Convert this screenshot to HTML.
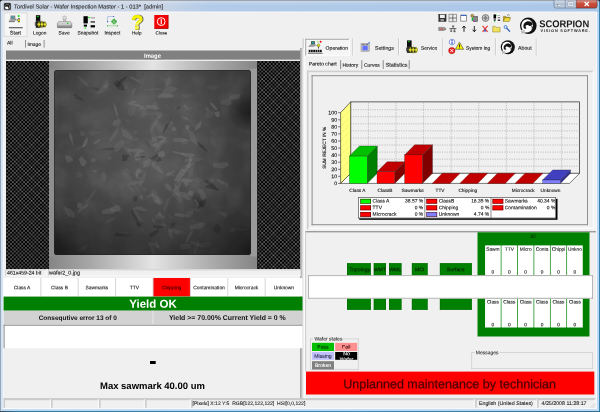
<!DOCTYPE html>
<html>
<head>
<meta charset="utf-8">
<style>
html,body{margin:0;padding:0;}
body{width:600px;height:412px;overflow:hidden;position:relative;background:#c3d4e8;font-family:"Liberation Sans",sans-serif;font-size:5.2px;color:#111;}
.a{position:absolute;box-sizing:border-box;}
.t{position:absolute;white-space:nowrap;line-height:1;}
.b{font-weight:bold;}
svg{position:absolute;overflow:visible;}
</style>
</head>
<body>
<svg style="left:0;top:0" width="600" height="412" viewBox="0 0 600 412">
<rect x="0.00" y="0.00" width="600.00" height="412.00" fill="#bdd8f4"/>
<linearGradient id="g0" x1="0" y1="0" x2="1" y2="0"><stop offset="0.0000" stop-color="#cdd7e5"/><stop offset="0.2700" stop-color="#c8d4e5"/><stop offset="0.3500" stop-color="#b3cbe8"/><stop offset="1.0000" stop-color="#aac7e8"/></linearGradient><rect x="0.00" y="0.00" width="600.00" height="12.00" fill="url(#g0)"/>
<linearGradient id="g1" x1="0" y1="0" x2="0" y2="1"><stop offset="0.0000" stop-color="rgb(255,255,255)" stop-opacity="0.28"/><stop offset="1.0000" stop-color="rgb(255,255,255)" stop-opacity="0"/></linearGradient><rect x="0.00" y="0.50" width="600.00" height="5.00" fill="url(#g1)"/>
<rect x="0.00" y="0.00" width="0.80" height="412.00" fill="#76828f"/>
<rect x="599.00" y="0.00" width="1.00" height="412.00" fill="#2f82aa"/>
<linearGradient id="g2" x1="0" y1="0" x2="1" y2="0"><stop offset="0.0000" stop-color="#3a4a58"/><stop offset="0.0300" stop-color="#2e7c9c"/><stop offset="0.6000" stop-color="#3d8cae"/><stop offset="1.0000" stop-color="#2e6f90"/></linearGradient><rect x="0.00" y="411.00" width="600.00" height="1.00" fill="url(#g2)"/>
<rect x="0.00" y="0.00" width="600.00" height="0.90" fill="#9a9ea4"/>
<polygon points="0,0 2.2,0 0,2.2" fill="#222"/><polygon points="600,0 597.8,0 600,2.2" fill="#334"/>
<rect x="0.80" y="1.00" width="0.70" height="410.00" fill="#e4edf7"/>
<rect x="2.60" y="11.50" width="594.30" height="397.60" fill="#fbfcfe"/>
<rect x="3.40" y="12.30" width="592.50" height="396.00" fill="#f0f0f0"/>
<rect x="3.50" y="12.40" width="24.00" height="24.40" fill="#f6f6f6"/><rect x="3.50" y="12.40" width="24.00" height="1.00" fill="#dadada"/><rect x="26.50" y="12.40" width="1.00" height="24.40" fill="#dadada"/><rect x="3.50" y="35.80" width="24.00" height="1.00" fill="#dadada"/><rect x="3.50" y="12.40" width="1.00" height="24.40" fill="#dadada"/>
<rect x="25.00" y="40.00" width="1.00" height="7.60" fill="#909090"/>
<rect x="43.60" y="40.00" width="1.00" height="7.60" fill="#909090"/>
<linearGradient id="g3" x1="0" y1="0" x2="1" y2="0"><stop offset="0.0000" stop-color="#9a9a9a"/><stop offset="0.2500" stop-color="#b0b0b0"/><stop offset="0.5000" stop-color="#cccccc"/><stop offset="0.7500" stop-color="#e8e8e8"/><stop offset="1.0000" stop-color="#f6f6f6"/></linearGradient><rect x="300.00" y="48.00" width="4.00" height="350.40" fill="url(#g3)"/>
<rect x="6.00" y="50.50" width="294.00" height="9.30" fill="#808080"/>
<rect x="6.00" y="59.80" width="294.00" height="1.20" fill="#ececec"/>
<g>
<defs>
<pattern id="hatchd" width="11" height="11" patternUnits="userSpaceOnUse" patternTransform="translate(9.4 68.4)">
<rect width="11" height="11" fill="#444"/><path d="M-1,-1 L12,12 M-1,12 L12,-1" stroke="#787878" stroke-width="0.8" fill="none"/>
</pattern>
<pattern id="hatch" width="3.75" height="3.75" patternUnits="userSpaceOnUse" patternTransform="translate(6.3 61.2)">
<rect x="0" y="0" width="1.875" height="1.875" fill="#000"/><rect x="1.875" y="1.875" width="1.875" height="1.875" fill="#000"/>
</pattern>
<linearGradient id="silver" x1="0" x2="1" y1="0" y2="0">
<stop offset="0" stop-color="#858585"/><stop offset="0.2" stop-color="#a8a8a8"/><stop offset="0.5" stop-color="#e4e4e4"/><stop offset="0.8" stop-color="#a8a8a8"/><stop offset="1" stop-color="#858585"/>
</linearGradient>
<linearGradient id="waf" x1="0" x2="1" y1="0" y2="0">
<stop offset="0" stop-color="#3f3f3f"/><stop offset="0.2" stop-color="#4a4a4a"/><stop offset="0.5" stop-color="#545454"/><stop offset="0.75" stop-color="#4a4a4a"/><stop offset="1" stop-color="#363636"/>
</linearGradient>
<linearGradient id="wafv" x1="0" x2="0" y1="0" y2="1">
<stop offset="0" stop-color="#000" stop-opacity="0.12"/><stop offset="0.15" stop-color="#000" stop-opacity="0"/><stop offset="0.6" stop-color="#000" stop-opacity="0"/><stop offset="1" stop-color="#000" stop-opacity="0.42"/>
</linearGradient>
<radialGradient id="blob1" cx="0.5" cy="0.5" r="0.5"><stop offset="0" stop-color="#000" stop-opacity="0.6"/><stop offset="1" stop-color="#000" stop-opacity="0"/></radialGradient>
<clipPath id="wclip"><rect x="54" y="70" width="197" height="185" rx="3"/></clipPath>
<filter id="bl" x="-5%" y="-5%" width="110%" height="110%"><feGaussianBlur stdDeviation="0.4"/></filter>
<filter id="noise" x="0" y="0" width="100%" height="100%"><feTurbulence type="fractalNoise" baseFrequency="0.045" numOctaves="3" seed="4" result="n"/><feColorMatrix type="matrix" values="0 0 0 0 1  0 0 0 0 1  0 0 0 0 1  1.6 0 0 0 -0.55"/></filter>
</defs>
<rect x="6" y="61" width="294" height="208" fill="url(#hatchd)"/><rect x="6" y="61" width="294" height="208" fill="url(#hatch)"/>
<rect x="49" y="61" width="208" height="208" fill="url(#silver)"/>
<rect x="49" y="68.5" width="5.5" height="188" fill="#8e8e8e"/>
<rect x="250.5" y="68.5" width="6.5" height="188" fill="#9a9a9a"/>
<rect x="54" y="70" width="197" height="185" rx="3" fill="url(#waf)"/>
<g clip-path="url(#wclip)">
<rect x="54" y="70" width="197" height="185" filter="url(#noise)" opacity="0.10"/>
<g filter="url(#bl)">
<polygon points="193.5,166.4 192.6,175.2 188.0,179.0 188.1,171.0" fill="#8e8e8e" opacity="0.14"/>
<polygon points="155.2,223.0 152.9,221.9 151.1,219.5 153.5,218.5 155.0,221.0" fill="#8e8e8e" opacity="0.26"/>
<polygon points="201.9,120.4 200.5,127.4 194.4,131.3 195.6,125.5" fill="#8e8e8e" opacity="0.28"/>
<polygon points="204.6,247.9 196.6,245.9 191.5,243.7 190.1,241.3 193.4,241.1 201.0,244.6" fill="#8e8e8e" opacity="0.20"/>
<polygon points="194.5,107.0 189.2,109.6 182.5,110.5 187.1,107.9" fill="#8e8e8e" opacity="0.14"/>
<polygon points="88.3,137.3 87.2,142.2 84.9,146.5 82.0,147.2 85.1,139.5" fill="#8e8e8e" opacity="0.29"/>
<polygon points="172.9,240.5 168.7,235.0 168.0,228.0 171.5,231.2" fill="#8e8e8e" opacity="0.27"/>
<polygon points="188.0,169.7 182.7,176.8 178.3,181.5 173.8,180.8 177.5,174.1 181.5,169.0" fill="#8e8e8e" opacity="0.28"/>
<polygon points="201.2,206.1 196.6,204.4 192.4,196.6 190.8,189.1 198.6,194.5 201.7,199.7" fill="#161616" opacity="0.13"/>
<polygon points="186.5,155.7 174.9,152.9 170.6,150.8 179.0,151.9" fill="#8e8e8e" opacity="0.29"/>
<polygon points="158.7,228.4 158.9,231.9 152.1,237.1 148.3,236.1 152.5,232.1" fill="#161616" opacity="0.19"/>
<polygon points="215.7,147.7 211.1,144.6 211.0,136.3 215.8,141.2" fill="#8e8e8e" opacity="0.08"/>
<polygon points="117.4,210.8 112.5,214.0 101.6,214.1 102.4,210.3 111.2,207.4" fill="#8e8e8e" opacity="0.29"/>
<polygon points="144.7,181.1 138.5,184.3 126.0,185.6 130.1,182.0 137.2,180.7" fill="#8e8e8e" opacity="0.17"/>
<polygon points="220.0,190.4 213.6,189.4 205.0,187.2 206.6,185.2 211.3,185.5" fill="#161616" opacity="0.29"/>
<polygon points="189.8,216.3 182.9,216.9 175.0,216.1 173.8,214.4 175.7,213.0 183.7,213.9" fill="#8e8e8e" opacity="0.29"/>
<polygon points="226.0,184.4 222.1,184.3 217.5,181.2 216.6,179.2 218.4,179.2 224.1,182.0" fill="#8e8e8e" opacity="0.19"/>
<polygon points="110.1,160.8 108.1,158.4 108.4,156.0 111.9,158.0" fill="#8e8e8e" opacity="0.17"/>
<polygon points="187.1,181.0 188.6,184.8 185.8,187.2 183.4,182.4" fill="#8e8e8e" opacity="0.27"/>
<polygon points="173.6,228.2 171.1,228.4 170.7,223.7 174.5,221.9 175.8,225.9" fill="#161616" opacity="0.16"/>
<polygon points="190.7,199.0 188.1,200.4 176.0,194.1 180.3,191.6 185.5,192.5" fill="#8e8e8e" opacity="0.23"/>
<polygon points="156.8,117.8 158.2,121.1 152.6,130.9 149.7,131.2 152.5,123.1" fill="#8e8e8e" opacity="0.18"/>
<polygon points="229.2,165.5 222.1,168.7 212.9,167.1 213.1,163.6 227.5,162.1" fill="#8e8e8e" opacity="0.20"/>
<polygon points="208.8,153.1 200.0,146.8 195.8,140.8 202.6,145.8" fill="#161616" opacity="0.28"/>
<polygon points="182.1,202.9 178.6,202.5 173.0,194.8 176.2,191.2 182.9,199.3" fill="#8e8e8e" opacity="0.19"/>
<polygon points="174.5,192.7 170.4,192.4 165.9,188.9 163.8,184.3 168.4,184.6 174.8,190.0" fill="#8e8e8e" opacity="0.11"/>
<polygon points="70.4,216.4 64.1,213.9 61.3,206.0 63.0,203.5 68.8,211.7" fill="#8e8e8e" opacity="0.08"/>
<polygon points="214.2,180.7 213.3,183.2 208.8,183.7 207.4,179.6 212.8,178.1" fill="#8e8e8e" opacity="0.15"/>
<polygon points="193.4,95.6 186.8,98.4 182.5,96.2 181.5,95.1 189.5,93.7" fill="#8e8e8e" opacity="0.13"/>
<polygon points="129.3,172.6 126.3,171.0 124.7,169.6 126.2,167.7 128.2,169.5" fill="#8e8e8e" opacity="0.15"/>
<polygon points="141.8,223.4 141.3,224.4 134.1,213.2 132.5,207.2 136.3,210.9 141.9,220.3" fill="#8e8e8e" opacity="0.20"/>
<polygon points="205.1,208.1 197.5,205.0 193.1,201.2 192.1,198.2 194.5,197.2 202.2,204.3" fill="#161616" opacity="0.18"/>
<polygon points="139.1,140.1 138.9,140.7 131.7,141.0 129.3,138.8 133.6,138.4 138.0,138.0" fill="#8e8e8e" opacity="0.11"/>
<polygon points="178.0,88.4 172.1,92.7 161.9,94.3 162.5,89.9 170.3,85.7" fill="#8e8e8e" opacity="0.17"/>
<polygon points="219.3,191.1 212.1,187.2 204.0,180.7 207.9,179.2 212.0,182.4" fill="#161616" opacity="0.24"/>
<polygon points="172.6,116.3 168.7,124.9 162.8,133.9 164.1,128.1" fill="#161616" opacity="0.26"/>
<polygon points="160.9,118.0 158.3,119.0 156.8,115.4 155.6,112.7 161.1,112.3 162.9,114.6" fill="#8e8e8e" opacity="0.18"/>
<polygon points="198.5,240.0 199.5,243.8 195.3,253.7 193.4,253.1 195.5,246.3" fill="#8e8e8e" opacity="0.21"/>
<polygon points="169.4,108.8 167.5,109.5 165.0,104.9 165.7,104.3 169.6,107.0" fill="#8e8e8e" opacity="0.09"/>
<polygon points="124.6,141.9 123.6,145.1 116.6,152.5 114.3,150.6 112.3,148.3 120.4,140.2" fill="#8e8e8e" opacity="0.16"/>
<polygon points="232.3,102.9 229.2,105.7 220.3,104.1 221.5,99.9 227.3,98.5" fill="#8e8e8e" opacity="0.13"/>
<polygon points="227.9,181.6 228.8,185.7 225.5,188.2 225.2,186.0" fill="#8e8e8e" opacity="0.11"/>
<polygon points="203.4,158.5 199.5,161.5 187.6,162.9 189.3,158.4 194.8,156.7" fill="#8e8e8e" opacity="0.13"/>
<polygon points="166.5,137.5 163.1,138.6 154.5,137.2 160.4,135.4" fill="#8e8e8e" opacity="0.29"/>
<polygon points="141.5,158.2 137.6,160.6 135.1,160.1 133.9,154.4 138.0,152.6" fill="#8e8e8e" opacity="0.28"/>
<polygon points="97.4,172.1 94.8,172.4 93.2,171.9 92.1,170.8 93.1,170.1 95.1,170.4" fill="#8e8e8e" opacity="0.24"/>
<polygon points="74.8,218.4 67.9,216.0 64.6,210.0 64.0,206.7 71.1,209.0 74.6,213.3" fill="#8e8e8e" opacity="0.21"/>
<polygon points="124.7,90.6 118.2,89.3 113.7,83.8 117.4,80.2 122.7,84.4" fill="#161616" opacity="0.28"/>
<polygon points="219.4,85.5 214.1,91.0 206.3,87.7 209.6,85.1" fill="#8e8e8e" opacity="0.10"/>
<polygon points="108.1,79.0 106.9,89.6 101.5,92.9 96.2,94.4 104.1,81.9" fill="#8e8e8e" opacity="0.17"/>
<polygon points="129.0,155.6 125.9,161.3 121.8,160.6 122.8,154.6" fill="#161616" opacity="0.30"/>
<polygon points="145.6,106.8 141.9,107.3 126.1,104.7 129.8,104.2 137.2,103.9" fill="#8e8e8e" opacity="0.25"/>
<polygon points="163.4,88.8 157.6,90.1 144.1,90.2 146.6,89.3 159.7,88.1" fill="#8e8e8e" opacity="0.14"/>
<polygon points="160.0,108.6 155.9,110.1 146.3,107.9 146.0,105.0 155.5,105.5" fill="#8e8e8e" opacity="0.26"/>
<polygon points="165.8,231.5 162.1,225.4 160.6,217.4 162.5,219.2 165.8,224.2" fill="#8e8e8e" opacity="0.11"/>
<polygon points="163.1,202.1 159.8,205.1 153.5,202.6 153.7,199.6 161.6,199.1" fill="#8e8e8e" opacity="0.22"/>
<polygon points="88.6,202.6 87.1,206.9 78.3,212.6 78.1,210.4 84.8,204.9" fill="#8e8e8e" opacity="0.27"/>
<polygon points="168.2,226.4 160.2,225.9 158.6,223.5 165.0,223.6" fill="#8e8e8e" opacity="0.11"/>
<polygon points="189.0,141.6 187.6,144.1 182.5,144.7 181.1,143.1 183.6,138.4 186.8,138.5" fill="#8e8e8e" opacity="0.14"/>
<polygon points="176.1,176.3 170.2,176.1 164.4,172.1 172.3,173.7" fill="#8e8e8e" opacity="0.13"/>
<polygon points="159.2,144.0 157.7,147.6 152.6,145.7 153.5,143.4 156.8,142.1" fill="#8e8e8e" opacity="0.19"/>
<polygon points="167.5,137.5 164.2,141.6 160.3,143.5 159.0,142.1 165.0,137.7" fill="#8e8e8e" opacity="0.29"/>
<polygon points="84.6,166.3 81.7,166.0 78.6,159.6 81.6,155.9 86.7,161.7" fill="#8e8e8e" opacity="0.25"/>
<polygon points="152.4,149.1 147.0,144.6 145.3,140.6 149.0,143.1" fill="#161616" opacity="0.13"/>
<polygon points="131.5,183.6 126.1,178.8 123.2,176.4 121.4,169.6 128.5,173.8 130.5,176.4" fill="#8e8e8e" opacity="0.09"/>
<polygon points="160.1,116.4 160.1,119.2 157.0,118.7 156.6,116.1 158.5,114.4" fill="#8e8e8e" opacity="0.09"/>
<polygon points="166.1,216.8 160.3,219.7 155.4,218.9 155.0,214.4 159.2,212.9" fill="#8e8e8e" opacity="0.19"/>
<polygon points="193.6,158.5 190.8,161.5 184.3,162.6 184.9,159.0 189.7,157.9" fill="#8e8e8e" opacity="0.23"/>
<polygon points="135.6,105.7 134.8,114.1 131.2,116.7 127.3,114.5 128.4,107.4" fill="#8e8e8e" opacity="0.13"/>
<polygon points="85.4,133.8 84.1,135.7 80.9,136.2 80.3,134.2 79.7,131.5 82.8,130.9" fill="#8e8e8e" opacity="0.16"/>
<polygon points="136.7,130.5 138.7,131.5 136.1,134.1 134.2,133.5 133.7,129.7" fill="#8e8e8e" opacity="0.12"/>
<polygon points="126.9,75.7 126.3,78.0 118.2,86.2 116.9,85.6 116.5,84.7 120.6,79.6" fill="#161616" opacity="0.28"/>
<polygon points="73.8,146.9 69.5,138.0 69.5,131.3 72.2,136.6" fill="#8e8e8e" opacity="0.26"/>
<polygon points="199.6,206.4 197.0,204.9 193.8,200.6 194.3,197.9 198.2,201.9" fill="#8e8e8e" opacity="0.28"/>
<polygon points="180.7,106.5 179.6,109.2 175.9,109.4 178.6,105.9" fill="#161616" opacity="0.18"/>
<polygon points="168.6,140.7 156.9,148.7 150.0,145.8 159.0,141.1" fill="#8e8e8e" opacity="0.16"/>
<polygon points="195.5,155.2 191.5,157.7 185.7,157.0 179.8,153.5 182.4,152.5 193.3,153.8" fill="#8e8e8e" opacity="0.28"/>
<polygon points="88.7,243.6 84.9,249.1 79.3,252.1 77.9,250.7 82.8,246.8" fill="#8e8e8e" opacity="0.19"/>
<polygon points="100.3,89.8 98.5,91.3 90.6,88.5 90.5,87.3 97.4,87.8" fill="#161616" opacity="0.13"/>
<polygon points="146.8,156.2 142.3,158.4 134.6,158.5 134.7,157.7 138.0,156.1 142.0,155.9" fill="#161616" opacity="0.22"/>
<polygon points="131.5,123.3 126.1,121.4 123.5,118.7 129.4,120.8" fill="#8e8e8e" opacity="0.12"/>
<polygon points="104.7,181.4 101.7,178.9 100.5,174.8 103.8,171.4 107.3,175.9" fill="#8e8e8e" opacity="0.18"/>
<polygon points="188.9,120.8 183.6,118.8 180.9,116.0 187.1,117.7" fill="#8e8e8e" opacity="0.27"/>
<polygon points="185.9,232.6 180.8,234.6 170.3,234.2 174.3,230.9 178.9,229.9" fill="#8e8e8e" opacity="0.08"/>
<polygon points="160.3,113.6 151.8,115.7 141.5,115.1 139.7,113.6 154.3,111.8" fill="#8e8e8e" opacity="0.07"/>
<polygon points="88.7,143.0 84.5,147.0 77.6,150.6 73.8,150.6 82.2,145.1" fill="#8e8e8e" opacity="0.09"/>
<polygon points="143.2,223.2 140.1,228.1 136.0,224.1 139.6,220.4" fill="#161616" opacity="0.19"/>
<polygon points="132.9,234.2 125.4,236.3 114.2,236.3 113.9,235.3 116.7,232.8 124.3,233.1" fill="#161616" opacity="0.18"/>
<polygon points="134.7,193.1 132.3,191.7 127.6,185.6 128.9,184.9 133.0,188.7" fill="#8e8e8e" opacity="0.16"/>
<polygon points="153.9,193.4 152.0,196.8 147.6,198.1 146.1,196.8 153.0,192.6" fill="#8e8e8e" opacity="0.21"/>
<polygon points="136.4,87.5 134.8,91.9 131.8,96.0 132.3,89.9" fill="#8e8e8e" opacity="0.22"/>
<polygon points="147.2,107.6 146.6,112.9 142.4,118.7 140.0,116.2 143.5,107.8" fill="#8e8e8e" opacity="0.09"/>
<polygon points="174.6,96.1 171.5,97.4 157.5,98.0 159.9,93.7 169.4,93.3" fill="#8e8e8e" opacity="0.29"/>
<polygon points="82.6,207.4 79.6,208.7 76.9,207.0 77.2,203.7 79.4,201.9 82.0,204.1" fill="#8e8e8e" opacity="0.25"/>
<polygon points="192.1,230.4 193.4,231.3 188.2,241.8 185.1,246.1 186.3,239.5 189.7,231.9" fill="#8e8e8e" opacity="0.29"/>
<polygon points="158.9,249.8 156.4,246.1 155.2,240.9 156.4,240.4 159.3,246.0" fill="#8e8e8e" opacity="0.25"/>
<polygon points="167.3,82.5 165.0,82.8 159.4,78.0 157.6,75.2 164.8,77.9" fill="#8e8e8e" opacity="0.08"/>
<polygon points="170.9,191.2 168.0,189.2 164.9,185.1 166.5,182.0 171.2,187.4" fill="#8e8e8e" opacity="0.16"/>
<polygon points="83.0,173.8 81.2,178.3 77.3,177.6 76.1,176.3 76.0,172.2 79.4,170.7" fill="#8e8e8e" opacity="0.10"/>
<polygon points="137.7,196.3 137.1,200.9 133.3,201.8 133.0,198.6 133.7,196.3" fill="#161616" opacity="0.17"/>
<polygon points="181.8,178.4 184.2,178.7 178.8,189.2 174.6,187.6 178.1,179.4" fill="#8e8e8e" opacity="0.14"/>
<polygon points="228.6,215.8 224.3,217.0 220.2,214.2 219.4,211.9 225.3,211.9" fill="#8e8e8e" opacity="0.16"/>
<polygon points="158.7,198.7 156.4,198.1 150.6,192.1 153.1,188.8 157.3,191.9" fill="#8e8e8e" opacity="0.14"/>
<polygon points="180.3,183.9 179.3,191.8 170.9,198.1 173.3,189.0" fill="#8e8e8e" opacity="0.14"/>
<polygon points="185.3,225.8 176.2,232.9 166.5,231.4 168.6,228.5 176.1,224.0" fill="#8e8e8e" opacity="0.08"/>
<polygon points="146.5,108.7 145.0,109.3 139.3,109.4 140.5,106.7 143.4,106.7" fill="#8e8e8e" opacity="0.25"/>
<polygon points="162.6,132.3 158.7,131.3 156.8,128.2 153.3,120.6 158.9,122.7 165.1,126.9" fill="#8e8e8e" opacity="0.10"/>
<polygon points="146.5,190.2 144.2,191.7 142.3,189.6 142.9,187.2 146.5,188.3" fill="#8e8e8e" opacity="0.13"/>
<polygon points="184.0,231.4 178.4,233.0 170.5,232.2 167.6,230.0 173.9,228.5 177.3,229.8" fill="#8e8e8e" opacity="0.20"/>
<polygon points="115.9,119.3 114.2,123.9 110.9,126.6 112.9,121.8" fill="#8e8e8e" opacity="0.17"/>
<polygon points="128.3,86.9 126.8,89.6 124.0,88.4 124.1,83.8 126.5,82.0" fill="#8e8e8e" opacity="0.12"/>
<polygon points="162.1,160.3 157.0,162.1 148.4,158.5 157.0,154.5" fill="#161616" opacity="0.29"/>
<polygon points="161.0,205.1 156.0,202.8 152.3,197.8 151.2,192.8 159.2,197.2" fill="#8e8e8e" opacity="0.27"/>
<polygon points="190.5,160.2 190.4,167.3 186.4,169.4 186.4,165.8" fill="#8e8e8e" opacity="0.28"/>
<polygon points="169.5,77.1 172.5,82.0 167.2,87.2 164.9,85.4 165.7,78.5" fill="#8e8e8e" opacity="0.16"/>
<polygon points="131.8,156.4 125.6,151.8 123.0,145.8 130.2,148.0" fill="#8e8e8e" opacity="0.17"/>
<polygon points="122.9,213.0 117.0,212.0 113.1,202.5 121.5,206.8" fill="#8e8e8e" opacity="0.13"/>
<polygon points="177.0,221.0 174.5,220.2 167.5,216.5 166.8,214.0 171.1,215.8 173.8,216.9" fill="#8e8e8e" opacity="0.09"/>
<polygon points="168.9,197.4 170.5,196.7 166.6,208.8 163.6,213.6 163.8,208.5 167.1,198.9" fill="#8e8e8e" opacity="0.17"/>
<polygon points="235.4,229.9 233.0,232.4 229.6,231.4 229.4,229.6 233.4,228.9" fill="#8e8e8e" opacity="0.12"/>
<polygon points="215.5,111.4 211.9,117.3 208.2,118.3 204.0,116.5 206.6,112.5 209.4,110.0" fill="#8e8e8e" opacity="0.12"/>
<polygon points="166.9,220.7 166.3,221.6 157.5,215.8 156.2,213.5 160.1,213.9 164.1,215.8" fill="#8e8e8e" opacity="0.14"/>
<polygon points="158.1,140.0 154.1,142.5 152.0,140.9 151.4,136.5 153.7,136.7" fill="#8e8e8e" opacity="0.22"/>
<polygon points="109.8,82.1 107.5,87.7 103.2,88.1 103.8,85.3" fill="#8e8e8e" opacity="0.23"/>
<polygon points="157.0,244.4 150.8,245.7 147.8,244.4 148.9,242.0 153.1,242.6" fill="#8e8e8e" opacity="0.18"/>
<polygon points="161.0,180.6 159.6,177.6 159.2,174.5 161.5,175.9" fill="#8e8e8e" opacity="0.09"/>
<polygon points="146.1,70.4 146.3,78.6 140.3,89.0 141.8,77.7" fill="#8e8e8e" opacity="0.10"/>
<polygon points="161.0,142.6 161.1,147.6 159.6,151.1 154.3,152.0 154.8,148.0 158.1,144.7" fill="#8e8e8e" opacity="0.14"/>
<polygon points="248.6,229.5 244.1,230.7 233.6,230.0 229.1,228.3 237.3,227.8" fill="#8e8e8e" opacity="0.08"/>
<polygon points="148.1,211.5 141.3,210.7 132.7,208.6 136.5,206.3 141.9,206.7" fill="#8e8e8e" opacity="0.29"/>
<polygon points="160.0,248.2 156.3,248.0 152.6,244.7 155.0,243.1 158.9,245.6" fill="#8e8e8e" opacity="0.25"/>
<polygon points="141.3,82.4 138.0,80.9 136.5,76.6 135.6,69.8 140.7,70.7 142.9,79.7" fill="#8e8e8e" opacity="0.11"/>
<polygon points="140.9,192.8 137.0,189.9 135.6,187.0 135.1,185.2 140.3,190.2" fill="#8e8e8e" opacity="0.08"/>
<polygon points="95.4,159.3 95.5,161.4 92.3,162.4 90.7,160.8 92.8,157.9" fill="#8e8e8e" opacity="0.21"/>
<polygon points="170.8,74.1 168.9,83.9 165.6,92.0 165.0,90.0 166.7,81.8" fill="#8e8e8e" opacity="0.09"/>
<polygon points="138.7,227.0 133.6,218.3 131.2,212.4 131.1,209.1 135.9,214.8 139.2,221.7" fill="#161616" opacity="0.14"/>
<polygon points="164.8,227.6 159.0,228.5 153.6,227.5 153.5,225.6 160.1,225.7" fill="#161616" opacity="0.28"/>
<polygon points="172.6,120.9 174.1,123.9 170.2,128.1 167.3,127.2 169.3,121.8" fill="#8e8e8e" opacity="0.15"/>
<polygon points="89.3,87.8 83.2,83.7 75.9,74.9 80.8,77.4 86.4,82.0" fill="#8e8e8e" opacity="0.16"/>
<polygon points="201.8,226.5 200.1,226.5 192.0,220.5 191.8,219.4 196.1,220.5 202.0,224.3" fill="#8e8e8e" opacity="0.08"/>
<polygon points="198.7,146.2 190.3,140.5 187.8,129.2 193.4,131.9" fill="#8e8e8e" opacity="0.20"/>
<polygon points="193.8,180.1 189.4,182.8 180.7,181.0 183.7,178.1 190.2,179.2" fill="#8e8e8e" opacity="0.29"/>
<polygon points="97.5,188.9 91.6,198.5 87.7,202.7 84.6,202.9 92.4,191.9" fill="#8e8e8e" opacity="0.14"/>
<polygon points="137.8,101.6 132.7,104.3 126.4,103.5 132.8,100.6" fill="#8e8e8e" opacity="0.25"/>
<polygon points="152.0,156.9 149.2,166.0 143.2,168.0 143.2,161.8" fill="#8e8e8e" opacity="0.24"/>
<polygon points="173.0,119.0 171.9,124.0 169.4,124.3 166.0,123.0 169.1,119.6" fill="#8e8e8e" opacity="0.09"/>
<polygon points="194.7,162.1 195.0,164.3 186.2,171.1 182.0,170.8 181.1,168.3 187.6,162.9" fill="#8e8e8e" opacity="0.16"/>
<polygon points="211.9,244.0 207.7,247.0 201.9,247.1 197.7,244.7 202.0,242.7 208.5,242.0" fill="#8e8e8e" opacity="0.13"/>
<polygon points="209.6,111.3 207.3,111.7 204.7,107.7 207.1,107.0 208.8,108.4" fill="#8e8e8e" opacity="0.18"/>
<polygon points="175.1,170.3 175.3,171.9 167.6,176.4 165.2,175.8 167.9,172.8 173.7,170.2" fill="#8e8e8e" opacity="0.22"/>
<polygon points="206.1,223.6 202.0,228.3 189.4,230.1 189.6,226.1 201.8,222.0" fill="#8e8e8e" opacity="0.25"/>
<polygon points="102.4,131.8 95.4,135.2 91.5,135.9 88.1,132.5 90.9,130.6 98.3,131.8" fill="#8e8e8e" opacity="0.12"/>
<polygon points="158.6,107.3 154.3,107.8 151.3,103.9 155.4,101.2 158.3,103.5" fill="#8e8e8e" opacity="0.14"/>
<polygon points="152.2,145.7 148.5,144.7 147.9,142.5 150.3,140.1 152.7,142.4" fill="#8e8e8e" opacity="0.10"/>
<polygon points="100.6,139.7 99.7,141.3 94.3,144.5 93.7,143.0 98.9,139.3" fill="#8e8e8e" opacity="0.25"/>
<polygon points="179.8,233.8 179.4,235.8 175.1,235.0 174.5,231.8 177.8,230.6" fill="#8e8e8e" opacity="0.14"/>
<polygon points="118.9,118.7 121.5,121.5 118.5,125.7 113.1,126.0 114.2,122.3 114.4,120.2" fill="#8e8e8e" opacity="0.18"/>
<polygon points="117.1,148.5 111.5,150.2 101.3,150.0 101.4,148.9 112.6,147.4" fill="#161616" opacity="0.25"/>
<polygon points="72.7,161.0 67.3,163.1 65.4,157.9 64.5,155.3 70.3,156.0 73.7,160.2" fill="#8e8e8e" opacity="0.22"/>
<polygon points="192.6,163.5 189.4,159.9 189.1,155.6 191.5,156.9" fill="#8e8e8e" opacity="0.20"/>
<polygon points="159.2,203.9 153.5,200.0 156.8,196.5 159.8,197.0" fill="#8e8e8e" opacity="0.07"/>
<polygon points="164.9,153.6 164.4,157.1 158.4,156.8 158.2,152.7 163.1,150.2" fill="#8e8e8e" opacity="0.29"/>
<polygon points="132.5,139.6 130.0,139.7 122.9,135.9 120.8,128.1 126.5,130.0 132.7,136.7" fill="#8e8e8e" opacity="0.20"/>
<polygon points="117.4,216.4 113.3,220.4 106.1,223.4 106.6,221.5 111.3,217.6" fill="#8e8e8e" opacity="0.17"/>
<polygon points="204.2,201.4 200.9,197.3 197.7,188.8 203.0,189.7 206.9,197.2" fill="#8e8e8e" opacity="0.21"/>
<polygon points="150.4,235.9 144.3,232.3 141.6,229.1 144.6,229.9" fill="#8e8e8e" opacity="0.08"/>
<polygon points="140.3,179.3 137.4,179.5 133.0,173.4 135.7,172.3 138.6,175.0" fill="#8e8e8e" opacity="0.19"/>
<polygon points="157.2,143.2 151.5,136.8 149.5,132.4 151.9,129.9 157.0,136.4" fill="#8e8e8e" opacity="0.10"/>
<polygon points="180.5,200.5 173.8,191.6 174.6,182.3 180.6,192.4" fill="#8e8e8e" opacity="0.20"/>
<polygon points="206.4,197.7 205.1,204.8 198.0,208.8 200.0,201.8" fill="#161616" opacity="0.24"/>
<polygon points="187.7,124.7 189.7,125.4 188.5,130.0 186.5,129.4 185.4,127.9 185.5,125.7" fill="#8e8e8e" opacity="0.30"/>
<polygon points="189.6,140.2 179.6,142.2 173.0,141.6 173.8,138.6 180.1,137.5" fill="#8e8e8e" opacity="0.23"/>
<polygon points="218.4,117.4 215.8,116.5 214.4,112.6 218.5,111.0 220.0,114.4" fill="#8e8e8e" opacity="0.29"/>
<polygon points="161.8,214.3 159.3,215.8 157.8,213.0 159.6,211.8" fill="#8e8e8e" opacity="0.30"/>
<polygon points="218.1,223.3 221.1,228.6 220.3,232.1 216.3,233.4 212.7,230.1 215.8,224.0" fill="#161616" opacity="0.16"/>
<polygon points="175.2,127.2 176.8,130.6 174.0,131.2 170.8,129.4 173.4,126.2" fill="#8e8e8e" opacity="0.26"/>
<polygon points="205.9,211.8 192.2,211.4 187.7,208.9 193.9,207.7" fill="#8e8e8e" opacity="0.10"/>
<polygon points="240.1,95.6 239.8,99.1 228.2,100.5 230.4,95.1 239.2,93.7" fill="#8e8e8e" opacity="0.17"/>
<polygon points="141.9,82.9 137.5,81.9 129.2,77.2 131.4,76.6 137.5,79.4" fill="#8e8e8e" opacity="0.28"/>
<polygon points="190.7,244.3 189.7,248.2 181.1,249.7 179.8,244.4 184.7,243.8" fill="#8e8e8e" opacity="0.23"/>
<polygon points="191.7,189.7 194.3,192.3 192.6,196.4 186.9,194.6 188.2,192.0" fill="#8e8e8e" opacity="0.29"/>
<polygon points="145.1,151.3 139.0,153.4 129.8,151.9 126.5,149.6 139.3,148.4" fill="#8e8e8e" opacity="0.25"/>
<polygon points="143.4,196.8 142.6,199.4 140.3,198.9 138.6,197.8 140.2,194.7 142.9,195.0" fill="#8e8e8e" opacity="0.21"/>
<polygon points="120.2,207.7 120.3,210.8 110.1,211.4 111.4,206.9 118.2,204.9" fill="#8e8e8e" opacity="0.30"/>
<polygon points="142.8,172.6 140.5,174.9 137.8,171.9 139.8,169.0 143.6,170.3" fill="#8e8e8e" opacity="0.16"/>
<polygon points="119.2,122.2 114.4,109.5 113.2,102.2 116.6,107.4" fill="#8e8e8e" opacity="0.27"/>
<polygon points="119.0,126.6 116.9,134.5 111.7,141.6 108.6,141.1 113.2,132.9" fill="#8e8e8e" opacity="0.17"/>
<polygon points="154.1,257.4 150.4,251.0 149.6,245.3 148.7,241.6 152.5,245.2 155.0,249.8" fill="#8e8e8e" opacity="0.19"/>
<polygon points="66.0,105.8 63.8,106.0 61.8,104.3 64.7,103.8" fill="#8e8e8e" opacity="0.13"/>
<polygon points="160.5,154.4 155.7,163.5 149.3,166.4 155.5,158.0" fill="#8e8e8e" opacity="0.16"/>
<polygon points="188.1,109.1 184.5,107.6 183.4,105.6 184.7,104.2 187.2,107.3" fill="#8e8e8e" opacity="0.21"/>
<polygon points="83.0,100.6 79.0,99.9 75.6,98.0 74.2,95.3 75.1,94.1 82.9,99.6" fill="#161616" opacity="0.25"/>
<polygon points="192.9,210.2 193.1,213.6 190.0,217.6 186.2,217.7 185.6,214.0 187.6,211.2" fill="#8e8e8e" opacity="0.21"/>
<polygon points="131.7,233.5 127.8,235.2 122.6,234.4 117.0,231.9 122.2,231.8 126.6,232.2" fill="#8e8e8e" opacity="0.11"/>
<polygon points="203.6,180.3 196.2,182.7 192.6,180.3 197.5,177.2" fill="#8e8e8e" opacity="0.12"/>
<polygon points="136.6,176.2 132.6,171.6 133.7,167.9 137.0,171.3" fill="#8e8e8e" opacity="0.09"/>
<polygon points="139.2,167.8 140.4,170.8 136.5,178.2 135.8,170.0" fill="#8e8e8e" opacity="0.30"/>
<polygon points="217.6,110.1 215.3,110.0 210.8,105.0 210.0,101.9 212.9,103.5 216.1,107.2" fill="#8e8e8e" opacity="0.28"/>
<polygon points="145.6,171.4 145.7,176.6 141.3,187.5 138.6,185.5 139.9,178.7" fill="#8e8e8e" opacity="0.19"/>
<polygon points="164.4,173.7 160.2,172.8 151.3,166.1 151.6,162.3 159.4,166.4" fill="#8e8e8e" opacity="0.23"/>

</g>
<rect x="54" y="70" width="197" height="185" fill="url(#wafv)"/>
<ellipse cx="252" cy="112" rx="26" ry="20" fill="url(#blob1)"/>
<ellipse cx="54" cy="248" rx="40" ry="30" fill="url(#blob1)" opacity="0.55"/>
<ellipse cx="250" cy="250" rx="30" ry="24" fill="url(#blob1)" opacity="0.4"/>
<rect x="54.4" y="70.4" width="196.2" height="184.2" rx="3" fill="none" stroke="#222" stroke-opacity="0.5" stroke-width="1.2"/>
</g>
</g>
<rect x="5.60" y="269.60" width="40.80" height="6.60" fill="#f0f0f0"/><rect x="5.60" y="269.60" width="40.80" height="0.60" fill="#b4b4b4"/><rect x="5.60" y="269.60" width="0.60" height="6.60" fill="#b4b4b4"/><rect x="5.60" y="275.60" width="40.80" height="0.60" fill="#fff"/><rect x="45.80" y="269.60" width="0.60" height="6.60" fill="#fff"/>
<rect x="48.00" y="269.60" width="252.40" height="6.60" fill="#f0f0f0"/><rect x="48.00" y="269.60" width="252.40" height="0.60" fill="#b4b4b4"/><rect x="48.00" y="269.60" width="0.60" height="6.60" fill="#b4b4b4"/><rect x="48.00" y="275.60" width="252.40" height="0.60" fill="#fff"/><rect x="299.80" y="269.60" width="0.60" height="6.60" fill="#fff"/>
<rect x="3.60" y="278.00" width="298.90" height="18.50" fill="#fff"/>
<rect x="40.30" y="278.00" width="1.00" height="18.50" fill="#d8d8d8"/>
<rect x="77.70" y="278.00" width="1.00" height="18.50" fill="#d8d8d8"/>
<rect x="115.10" y="278.00" width="1.00" height="18.50" fill="#d8d8d8"/>
<rect x="153.00" y="278.00" width="37.40" height="18.50" fill="#ff0000"/>
<rect x="152.50" y="278.00" width="1.00" height="18.50" fill="#d8d8d8"/>
<rect x="189.90" y="278.00" width="1.00" height="18.50" fill="#d8d8d8"/>
<rect x="227.30" y="278.00" width="1.00" height="18.50" fill="#d8d8d8"/>
<rect x="264.70" y="278.00" width="1.00" height="18.50" fill="#d8d8d8"/>
<rect x="3.60" y="296.60" width="298.90" height="14.10" fill="#008000"/>
<rect x="3.60" y="310.70" width="298.90" height="14.00" fill="#d2d2d2"/>
<rect x="152.50" y="310.70" width="1.00" height="13.80" fill="#e8e8e8"/>
<rect x="3.60" y="324.70" width="298.90" height="23.50" fill="#fff"/><rect x="3.60" y="324.70" width="1.00" height="23.50" fill="#888"/><rect x="3.60" y="324.70" width="298.90" height="1.00" fill="#888"/>
<rect x="150.00" y="361.00" width="5.70" height="3.00" fill="#000"/>
<rect x="3.40" y="398.10" width="592.60" height="0.80" fill="#c4c4c4"/>
<rect x="3.80" y="399.40" width="46.60" height="8.40" fill="#f0f0f0"/><rect x="3.80" y="399.40" width="46.60" height="0.70" fill="#b4b4b4"/><rect x="3.80" y="399.40" width="0.70" height="8.40" fill="#a0a0a0"/><rect x="49.80" y="399.40" width="0.60" height="8.40" fill="#fff"/>
<rect x="51.60" y="399.40" width="46.80" height="8.40" fill="#f0f0f0"/><rect x="51.60" y="399.40" width="46.80" height="0.70" fill="#b4b4b4"/><rect x="51.60" y="399.40" width="0.70" height="8.40" fill="#a0a0a0"/><rect x="97.80" y="399.40" width="0.60" height="8.40" fill="#fff"/>
<rect x="99.60" y="399.40" width="44.80" height="8.40" fill="#f0f0f0"/><rect x="99.60" y="399.40" width="44.80" height="0.70" fill="#b4b4b4"/><rect x="99.60" y="399.40" width="0.70" height="8.40" fill="#a0a0a0"/><rect x="143.80" y="399.40" width="0.60" height="8.40" fill="#fff"/>
<rect x="145.60" y="399.40" width="44.80" height="8.40" fill="#f0f0f0"/><rect x="145.60" y="399.40" width="44.80" height="0.70" fill="#b4b4b4"/><rect x="145.60" y="399.40" width="0.70" height="8.40" fill="#a0a0a0"/><rect x="189.80" y="399.40" width="0.60" height="8.40" fill="#fff"/>
<rect x="191.60" y="399.40" width="282.80" height="8.40" fill="#f0f0f0"/><rect x="191.60" y="399.40" width="282.80" height="0.70" fill="#b4b4b4"/><rect x="191.60" y="399.40" width="0.70" height="8.40" fill="#a0a0a0"/><rect x="473.80" y="399.40" width="0.60" height="8.40" fill="#fff"/>
<rect x="475.60" y="399.40" width="60.80" height="8.40" fill="#f0f0f0"/><rect x="475.60" y="399.40" width="60.80" height="0.70" fill="#b4b4b4"/><rect x="475.60" y="399.40" width="0.70" height="8.40" fill="#a0a0a0"/><rect x="535.80" y="399.40" width="0.60" height="8.40" fill="#fff"/>
<rect x="537.60" y="399.40" width="57.40" height="8.40" fill="#f0f0f0"/><rect x="537.60" y="399.40" width="57.40" height="0.70" fill="#b4b4b4"/><rect x="537.60" y="399.40" width="0.70" height="8.40" fill="#a0a0a0"/><rect x="594.40" y="399.40" width="0.60" height="8.40" fill="#fff"/>
<path d="M590.5,407.5 L595.5,402.5 M592.3,407.5 L595.5,404.3 M594,407.5 L595.5,406" stroke="#b0b0b0" stroke-width="0.6" stroke-dasharray="0.7 0.5"/>
<rect x="304.00" y="38.50" width="1.40" height="360.00" fill="#fafafa"/>
<rect x="302.70" y="38.50" width="0.90" height="10.00" fill="#c4c4c4"/>
<rect x="305.20" y="38.80" width="44.80" height="16.80" fill="#f5f5f5"/><rect x="305.20" y="38.80" width="44.80" height="1.00" fill="#a8a8a8"/><rect x="349.00" y="38.80" width="1.00" height="16.80" fill="#fdfdfd"/><rect x="305.20" y="54.60" width="44.80" height="1.00" fill="#fdfdfd"/><rect x="305.20" y="38.80" width="1.00" height="16.80" fill="#a8a8a8"/>
<rect x="352.40" y="38.40" width="0.90" height="17.00" fill="#c2c2c2"/>
<rect x="353.30" y="38.40" width="0.80" height="17.00" fill="#fbfbfb"/>
<rect x="398.20" y="38.40" width="0.90" height="17.00" fill="#c2c2c2"/>
<rect x="399.10" y="38.40" width="0.80" height="17.00" fill="#fbfbfb"/>
<rect x="442.40" y="38.40" width="0.90" height="17.00" fill="#c2c2c2"/>
<rect x="443.30" y="38.40" width="0.80" height="17.00" fill="#fbfbfb"/>
<rect x="494.90" y="38.40" width="0.90" height="17.00" fill="#c2c2c2"/>
<rect x="495.80" y="38.40" width="0.80" height="17.00" fill="#fbfbfb"/>
<rect x="535.80" y="38.40" width="0.90" height="17.00" fill="#c2c2c2"/>
<rect x="536.70" y="38.40" width="0.80" height="17.00" fill="#fbfbfb"/>
<rect x="340.10" y="60.20" width="1.00" height="8.80" fill="#8c8c8c"/>
<rect x="361.30" y="60.20" width="1.00" height="8.80" fill="#8c8c8c"/>
<rect x="382.70" y="60.20" width="1.00" height="8.80" fill="#8c8c8c"/>
<rect x="408.70" y="60.20" width="1.00" height="8.80" fill="#8c8c8c"/>
<rect x="307.00" y="70.60" width="287.40" height="158.40" fill="#f0f0f0"/><rect x="307.00" y="70.60" width="287.40" height="1.60" fill="#cfcfcf"/><rect x="592.80" y="70.60" width="1.60" height="158.40" fill="#fcfcfc"/><rect x="307.00" y="227.40" width="287.40" height="1.60" fill="#fcfcfc"/><rect x="307.00" y="70.60" width="1.60" height="158.40" fill="#cfcfcf"/>
<rect x="311.60" y="75.20" width="276.40" height="150.00" fill="#f0f0f0"/><rect x="311.60" y="75.20" width="276.40" height="1.00" fill="#8e8e8e"/><rect x="587.00" y="75.20" width="1.00" height="150.00" fill="#8e8e8e"/><rect x="311.60" y="224.20" width="276.40" height="1.00" fill="#8e8e8e"/><rect x="311.60" y="75.20" width="1.00" height="150.00" fill="#8e8e8e"/>
<g>
<rect x="350.7" y="101.9" width="228.9" height="71.4" fill="#f0f0f0" stroke="#222" stroke-width="0.7"/>
<polygon points="340.6,183.4 569.5,183.4 579.6,173.3 350.7,173.3" fill="#fff" stroke="#222" stroke-width="0.6"/>
<polygon points="340.6,183.4 340.6,112.7 350.7,101.9 350.7,173.3" fill="#ffff80" stroke="#222" stroke-width="0.6"/>
<line x1="350.7" y1="166.2" x2="579.6" y2="166.2" stroke="#a0a0a0" stroke-width="0.6" stroke-dasharray="1.2 1.2"/>
<line x1="340.6" y1="176.3" x2="350.7" y2="166.2" stroke="#c8c860" stroke-width="0.5" stroke-dasharray="1.2 1.2"/>
<line x1="350.7" y1="159.2" x2="579.6" y2="159.2" stroke="#a0a0a0" stroke-width="0.6" stroke-dasharray="1.2 1.2"/>
<line x1="340.6" y1="169.3" x2="350.7" y2="159.2" stroke="#c8c860" stroke-width="0.5" stroke-dasharray="1.2 1.2"/>
<line x1="350.7" y1="152.1" x2="579.6" y2="152.1" stroke="#a0a0a0" stroke-width="0.6" stroke-dasharray="1.2 1.2"/>
<line x1="340.6" y1="162.2" x2="350.7" y2="152.1" stroke="#c8c860" stroke-width="0.5" stroke-dasharray="1.2 1.2"/>
<line x1="350.7" y1="145.0" x2="579.6" y2="145.0" stroke="#a0a0a0" stroke-width="0.6" stroke-dasharray="1.2 1.2"/>
<line x1="340.6" y1="155.1" x2="350.7" y2="145.0" stroke="#c8c860" stroke-width="0.5" stroke-dasharray="1.2 1.2"/>
<line x1="350.7" y1="138.0" x2="579.6" y2="138.0" stroke="#a0a0a0" stroke-width="0.6" stroke-dasharray="1.2 1.2"/>
<line x1="340.6" y1="148.1" x2="350.7" y2="138.0" stroke="#c8c860" stroke-width="0.5" stroke-dasharray="1.2 1.2"/>
<line x1="350.7" y1="130.9" x2="579.6" y2="130.9" stroke="#a0a0a0" stroke-width="0.6" stroke-dasharray="1.2 1.2"/>
<line x1="340.6" y1="141.0" x2="350.7" y2="130.9" stroke="#c8c860" stroke-width="0.5" stroke-dasharray="1.2 1.2"/>
<line x1="350.7" y1="123.8" x2="579.6" y2="123.8" stroke="#a0a0a0" stroke-width="0.6" stroke-dasharray="1.2 1.2"/>
<line x1="340.6" y1="133.9" x2="350.7" y2="123.8" stroke="#c8c860" stroke-width="0.5" stroke-dasharray="1.2 1.2"/>
<line x1="350.7" y1="116.7" x2="579.6" y2="116.7" stroke="#a0a0a0" stroke-width="0.6" stroke-dasharray="1.2 1.2"/>
<line x1="340.6" y1="126.8" x2="350.7" y2="116.7" stroke="#c8c860" stroke-width="0.5" stroke-dasharray="1.2 1.2"/>
<line x1="350.7" y1="109.7" x2="579.6" y2="109.7" stroke="#a0a0a0" stroke-width="0.6" stroke-dasharray="1.2 1.2"/>
<line x1="340.6" y1="119.8" x2="350.7" y2="109.7" stroke="#c8c860" stroke-width="0.5" stroke-dasharray="1.2 1.2"/>
<line x1="368.4" y1="173.3" x2="368.4" y2="102.6" stroke="#a0a0a0" stroke-width="0.6" stroke-dasharray="1.2 1.2"/>
<line x1="396.0" y1="173.3" x2="396.0" y2="102.6" stroke="#a0a0a0" stroke-width="0.6" stroke-dasharray="1.2 1.2"/>
<line x1="423.6" y1="173.3" x2="423.6" y2="102.6" stroke="#a0a0a0" stroke-width="0.6" stroke-dasharray="1.2 1.2"/>
<line x1="451.2" y1="173.3" x2="451.2" y2="102.6" stroke="#a0a0a0" stroke-width="0.6" stroke-dasharray="1.2 1.2"/>
<line x1="478.8" y1="173.3" x2="478.8" y2="102.6" stroke="#a0a0a0" stroke-width="0.6" stroke-dasharray="1.2 1.2"/>
<line x1="506.4" y1="173.3" x2="506.4" y2="102.6" stroke="#a0a0a0" stroke-width="0.6" stroke-dasharray="1.2 1.2"/>
<line x1="534.0" y1="173.3" x2="534.0" y2="102.6" stroke="#a0a0a0" stroke-width="0.6" stroke-dasharray="1.2 1.2"/>
<line x1="561.6" y1="173.3" x2="561.6" y2="102.6" stroke="#a0a0a0" stroke-width="0.6" stroke-dasharray="1.2 1.2"/>
<polygon points="367.2,183.4 377.3,173.3 377.3,146.0 367.2,156.1" fill="#008000" stroke="#202020" stroke-width="0.3"/>
<polygon points="349.4,156.1 367.2,156.1 377.3,146.0 359.5,146.0" fill="#00c000" stroke="#202020" stroke-width="0.3"/>
<rect x="349.4" y="156.1" width="17.8" height="27.3" fill="#00ff00" stroke="#202020" stroke-width="0.3"/>
<polygon points="394.8,183.4 404.9,173.3 404.9,161.7 394.8,171.8" fill="#800000" stroke="#202020" stroke-width="0.3"/>
<polygon points="377.0,171.8 394.8,171.8 404.9,161.7 387.1,161.7" fill="#c00000" stroke="#202020" stroke-width="0.3"/>
<rect x="377.0" y="171.8" width="17.8" height="11.6" fill="#ff0000" stroke="#202020" stroke-width="0.3"/>
<polygon points="422.4,183.4 432.5,173.3 432.5,144.8 422.4,154.9" fill="#800000" stroke="#202020" stroke-width="0.3"/>
<polygon points="404.6,154.9 422.4,154.9 432.5,144.8 414.7,144.8" fill="#c00000" stroke="#202020" stroke-width="0.3"/>
<rect x="404.6" y="154.9" width="17.8" height="28.5" fill="#ff0000" stroke="#202020" stroke-width="0.3"/>
<polygon points="432.2,183.4 450.0,183.4 460.1,173.3 442.3,173.3" fill="#c00000" stroke="#400000" stroke-width="0.3"/>
<polygon points="459.8,183.4 477.6,183.4 487.7,173.3 469.9,173.3" fill="#c00000" stroke="#400000" stroke-width="0.3"/>
<polygon points="487.4,183.4 505.2,183.4 515.3,173.3 497.5,173.3" fill="#c00000" stroke="#400000" stroke-width="0.3"/>
<polygon points="515.0,183.4 532.8,183.4 542.9,173.3 525.1,173.3" fill="#c00000" stroke="#400000" stroke-width="0.3"/>
<polygon points="560.4,183.4 570.5,173.3 570.5,169.9 560.4,180.0" fill="#303090" stroke="#202020" stroke-width="0.3"/>
<polygon points="542.6,180.0 560.4,180.0 570.5,169.9 552.7,169.9" fill="#4040c0" stroke="#202020" stroke-width="0.3"/>
<rect x="542.6" y="180.0" width="17.8" height="3.4" fill="#8080ff" stroke="#202020" stroke-width="0.3"/>
<line x1="338.1" y1="183.4" x2="340.6" y2="183.4" stroke="#222" stroke-width="0.6"/>
<line x1="338.1" y1="176.3" x2="340.6" y2="176.3" stroke="#222" stroke-width="0.6"/>
<line x1="338.1" y1="169.3" x2="340.6" y2="169.3" stroke="#222" stroke-width="0.6"/>
<line x1="338.1" y1="162.2" x2="340.6" y2="162.2" stroke="#222" stroke-width="0.6"/>
<line x1="338.1" y1="155.1" x2="340.6" y2="155.1" stroke="#222" stroke-width="0.6"/>
<line x1="338.1" y1="148.1" x2="340.6" y2="148.1" stroke="#222" stroke-width="0.6"/>
<line x1="338.1" y1="141.0" x2="340.6" y2="141.0" stroke="#222" stroke-width="0.6"/>
<line x1="338.1" y1="133.9" x2="340.6" y2="133.9" stroke="#222" stroke-width="0.6"/>
<line x1="338.1" y1="126.8" x2="340.6" y2="126.8" stroke="#222" stroke-width="0.6"/>
<line x1="338.1" y1="119.8" x2="340.6" y2="119.8" stroke="#222" stroke-width="0.6"/>
<line x1="338.1" y1="112.7" x2="340.6" y2="112.7" stroke="#222" stroke-width="0.6"/>
</g>
<rect x="359.30" y="198.80" width="198.20" height="21.00" fill="#000"/>
<rect x="358.00" y="197.30" width="198.00" height="21.00" fill="#fff"/><rect x="358.00" y="197.30" width="198.00" height="0.60" fill="#333"/><rect x="555.40" y="197.30" width="0.60" height="21.00" fill="#333"/><rect x="358.00" y="217.70" width="198.00" height="0.60" fill="#333"/><rect x="358.00" y="197.30" width="0.60" height="21.00" fill="#333"/>
<rect x="360.40" y="198.90" width="10.60" height="4.70" fill="#00ff00"/><rect x="360.40" y="198.90" width="10.60" height="0.50" fill="#400"/><rect x="370.50" y="198.90" width="0.50" height="4.70" fill="#400"/><rect x="360.40" y="203.10" width="10.60" height="0.50" fill="#400"/><rect x="360.40" y="198.90" width="0.50" height="4.70" fill="#400"/>
<rect x="360.40" y="205.50" width="10.60" height="4.70" fill="#ff0000"/><rect x="360.40" y="205.50" width="10.60" height="0.50" fill="#400"/><rect x="370.50" y="205.50" width="0.50" height="4.70" fill="#400"/><rect x="360.40" y="209.70" width="10.60" height="0.50" fill="#400"/><rect x="360.40" y="205.50" width="0.50" height="4.70" fill="#400"/>
<rect x="360.40" y="212.10" width="10.60" height="4.70" fill="#ff0000"/><rect x="360.40" y="212.10" width="10.60" height="0.50" fill="#400"/><rect x="370.50" y="212.10" width="0.50" height="4.70" fill="#400"/><rect x="360.40" y="216.30" width="10.60" height="0.50" fill="#400"/><rect x="360.40" y="212.10" width="0.50" height="4.70" fill="#400"/>
<rect x="424.60" y="197.30" width="0.60" height="21.00" fill="#444"/>
<rect x="426.50" y="198.90" width="10.60" height="4.70" fill="#ff0000"/><rect x="426.50" y="198.90" width="10.60" height="0.50" fill="#400"/><rect x="436.60" y="198.90" width="0.50" height="4.70" fill="#400"/><rect x="426.50" y="203.10" width="10.60" height="0.50" fill="#400"/><rect x="426.50" y="198.90" width="0.50" height="4.70" fill="#400"/>
<rect x="426.50" y="205.50" width="10.60" height="4.70" fill="#ff0000"/><rect x="426.50" y="205.50" width="10.60" height="0.50" fill="#400"/><rect x="436.60" y="205.50" width="0.50" height="4.70" fill="#400"/><rect x="426.50" y="209.70" width="10.60" height="0.50" fill="#400"/><rect x="426.50" y="205.50" width="0.50" height="4.70" fill="#400"/>
<rect x="426.50" y="212.10" width="10.60" height="4.70" fill="#8080ff"/><rect x="426.50" y="212.10" width="10.60" height="0.50" fill="#400"/><rect x="436.60" y="212.10" width="0.50" height="4.70" fill="#400"/><rect x="426.50" y="216.30" width="10.60" height="0.50" fill="#400"/><rect x="426.50" y="212.10" width="0.50" height="4.70" fill="#400"/>
<rect x="490.70" y="197.30" width="0.60" height="21.00" fill="#444"/>
<rect x="492.60" y="198.90" width="10.60" height="4.70" fill="#ff0000"/><rect x="492.60" y="198.90" width="10.60" height="0.50" fill="#400"/><rect x="502.70" y="198.90" width="0.50" height="4.70" fill="#400"/><rect x="492.60" y="203.10" width="10.60" height="0.50" fill="#400"/><rect x="492.60" y="198.90" width="0.50" height="4.70" fill="#400"/>
<rect x="492.60" y="205.50" width="10.60" height="4.70" fill="#ff0000"/><rect x="492.60" y="205.50" width="10.60" height="0.50" fill="#400"/><rect x="502.70" y="205.50" width="0.50" height="4.70" fill="#400"/><rect x="492.60" y="209.70" width="10.60" height="0.50" fill="#400"/><rect x="492.60" y="205.50" width="0.50" height="4.70" fill="#400"/>
<rect x="305.30" y="231.00" width="290.70" height="140.50" fill="#f0f0f0"/><rect x="305.30" y="231.00" width="290.70" height="1.40" fill="#9c9c9c"/><rect x="305.30" y="231.00" width="0.80" height="140.50" fill="#c4c4c4"/>
<rect x="477.50" y="232.30" width="112.00" height="104.20" fill="#008000"/>
<rect x="485.05" y="245.40" width="15.70" height="30.00" fill="#fff"/>
<rect x="485.05" y="298.50" width="15.70" height="29.00" fill="#fff"/>
<rect x="501.45" y="245.40" width="15.70" height="30.00" fill="#fff"/>
<rect x="501.45" y="298.50" width="15.70" height="29.00" fill="#fff"/>
<rect x="517.85" y="245.40" width="15.70" height="30.00" fill="#fff"/>
<rect x="517.85" y="298.50" width="15.70" height="29.00" fill="#fff"/>
<rect x="534.25" y="245.40" width="15.70" height="30.00" fill="#fff"/>
<rect x="534.25" y="298.50" width="15.70" height="29.00" fill="#fff"/>
<rect x="550.65" y="245.40" width="15.70" height="30.00" fill="#fff"/>
<rect x="550.65" y="298.50" width="15.70" height="29.00" fill="#fff"/>
<rect x="567.05" y="245.40" width="15.70" height="30.00" fill="#fff"/>
<rect x="567.05" y="298.50" width="15.70" height="29.00" fill="#fff"/>
<rect x="347.00" y="263.20" width="23.80" height="46.60" fill="#008000"/><rect x="347.00" y="263.20" width="23.80" height="0.50" fill="#006800"/><rect x="370.30" y="263.20" width="0.50" height="46.60" fill="#006800"/><rect x="347.00" y="309.30" width="23.80" height="0.50" fill="#006800"/><rect x="347.00" y="263.20" width="0.50" height="46.60" fill="#006800"/>
<clipPath id="stc0"><rect x="347.0" y="263" width="23.4" height="12"/></clipPath>
<rect x="373.80" y="263.20" width="12.20" height="46.60" fill="#008000"/><rect x="373.80" y="263.20" width="12.20" height="0.50" fill="#006800"/><rect x="385.50" y="263.20" width="0.50" height="46.60" fill="#006800"/><rect x="373.80" y="309.30" width="12.20" height="0.50" fill="#006800"/><rect x="373.80" y="263.20" width="0.50" height="46.60" fill="#006800"/>
<clipPath id="stc1"><rect x="373.8" y="263" width="11.8" height="12"/></clipPath>
<rect x="389.00" y="263.20" width="12.40" height="46.60" fill="#008000"/><rect x="389.00" y="263.20" width="12.40" height="0.50" fill="#006800"/><rect x="400.90" y="263.20" width="0.50" height="46.60" fill="#006800"/><rect x="389.00" y="309.30" width="12.40" height="0.50" fill="#006800"/><rect x="389.00" y="263.20" width="0.50" height="46.60" fill="#006800"/>
<clipPath id="stc2"><rect x="389.0" y="263" width="12.0" height="12"/></clipPath>
<rect x="411.90" y="263.20" width="15.60" height="46.60" fill="#008000"/><rect x="411.90" y="263.20" width="15.60" height="0.50" fill="#006800"/><rect x="427.00" y="263.20" width="0.50" height="46.60" fill="#006800"/><rect x="411.90" y="309.30" width="15.60" height="0.50" fill="#006800"/><rect x="411.90" y="263.20" width="0.50" height="46.60" fill="#006800"/>
<clipPath id="stc3"><rect x="411.9" y="263" width="15.2" height="12"/></clipPath>
<rect x="439.90" y="263.20" width="31.90" height="46.60" fill="#008000"/><rect x="439.90" y="263.20" width="31.90" height="0.50" fill="#006800"/><rect x="471.30" y="263.20" width="0.50" height="46.60" fill="#006800"/><rect x="439.90" y="309.30" width="31.90" height="0.50" fill="#006800"/><rect x="439.90" y="263.20" width="0.50" height="46.60" fill="#006800"/>
<clipPath id="stc4"><rect x="439.9" y="263" width="31.5" height="12"/></clipPath>
<rect x="308.00" y="275.30" width="285.00" height="23.30" fill="#fff"/><rect x="308.00" y="275.30" width="285.00" height="0.80" fill="#a4a4a4"/><rect x="592.20" y="275.30" width="0.80" height="23.30" fill="#a4a4a4"/><rect x="308.00" y="297.80" width="285.00" height="0.80" fill="#a4a4a4"/><rect x="308.00" y="275.30" width="0.80" height="23.30" fill="#a4a4a4"/>
<rect x="310.00" y="338.50" width="48.70" height="31.20" fill="#f0f0f0"/><rect x="310.00" y="338.50" width="48.70" height="0.80" fill="#cfcfcf"/><rect x="357.90" y="338.50" width="0.80" height="31.20" fill="#cfcfcf"/><rect x="310.00" y="368.90" width="48.70" height="0.80" fill="#cfcfcf"/><rect x="310.00" y="338.50" width="0.80" height="31.20" fill="#cfcfcf"/>
<rect x="313.50" y="336.00" width="29.50" height="5.00" fill="#f0f0f0"/>
<rect x="312.00" y="342.80" width="22.00" height="8.20" fill="#00c000"/>
<rect x="335.20" y="342.80" width="22.00" height="8.20" fill="#ff9090"/>
<rect x="312.00" y="352.00" width="22.00" height="7.80" fill="#c0c0ff"/>
<rect x="312.00" y="361.20" width="22.00" height="8.30" fill="#808080"/>
<rect x="335.20" y="352.00" width="22.00" height="7.80" fill="#000"/>
<clipPath id="nwclip"><rect x="335.2" y="352" width="22" height="7.8"/></clipPath>
<rect x="471.30" y="352.10" width="121.50" height="17.00" fill="#f0f0f0"/><rect x="471.30" y="352.10" width="121.50" height="0.80" fill="#cfcfcf"/><rect x="592.00" y="352.10" width="0.80" height="17.00" fill="#cfcfcf"/><rect x="471.30" y="368.30" width="121.50" height="0.80" fill="#cfcfcf"/><rect x="471.30" y="352.10" width="0.80" height="17.00" fill="#cfcfcf"/>
<rect x="474.80" y="350.00" width="24.70" height="5.00" fill="#f0f0f0"/>
<rect x="306.00" y="371.60" width="288.30" height="22.90" fill="#ff0000"/>
<g>
<rect x="3.7" y="2.7" width="7.4" height="7.5" rx="1.2" fill="#777"/>
<rect x="4.3" y="3.3" width="6.2" height="6.3" rx="1" fill="#1a1a1a"/>
<circle cx="7.3" cy="6.7" r="2.5" fill="#fff"/>
<path d="M5,5.9 C5.6,4 8.6,3.9 9.4,5.7 C9.8,7.1 9.2,8.5 8.2,9.1 C8.6,7.7 8.2,6.7 7.2,6.5 C6.4,6.4 6.2,7.1 5.6,7.3 Z" fill="#1a1a1a"/>
<defs><linearGradient id="wb" x1="0" y1="0" x2="0" y2="1"><stop offset="0" stop-color="#d8e2ee"/><stop offset="0.5" stop-color="#b4c4d8"/><stop offset="1" stop-color="#c0d0e2"/></linearGradient>
<linearGradient id="wc" x1="0" y1="0" x2="0" y2="1"><stop offset="0" stop-color="#e0a098"/><stop offset="0.45" stop-color="#c8503c"/><stop offset="1" stop-color="#c04030"/></linearGradient></defs>
<path d="M554,0 H597 V6 Q597,8 595,8 H556 Q554,8 554,6 Z" fill="url(#wb)" stroke="#5a6a80" stroke-width="0.6"/>
<path d="M576.3,0 H597 V6 Q597,8 595,8 H576.3 Z" fill="url(#wc)" stroke="#5a3030" stroke-width="0.5"/>
<path d="M565.2,0 V8" stroke="#5a6a80" stroke-width="0.5"/>
<rect x="557.4" y="4.6" width="4.4" height="1.4" fill="#fff" stroke="#556" stroke-width="0.3"/>
<rect x="568.6" y="2" width="4.6" height="4" fill="none" stroke="#fff" stroke-width="0.9"/><rect x="568" y="1.4" width="5.8" height="5.2" fill="none" stroke="#556" stroke-width="0.3"/>
<path d="M584.6,2 L588.8,6 M588.8,2 L584.6,6" stroke="#fff" stroke-width="1.3"/>
<polygon points="10.4,15.5 15.4,15.5 15.4,19 10.4,19" fill="#8e8e8e"/>
<rect x="11.6" y="16.5" width="1.9" height="1.7" fill="#1e96c0"/>
<polygon points="8.9,21.7 14.6,21.7 16,19.1 10.4,19.1" fill="#a8a8a8" stroke="#6a6a6a" stroke-width="0.3"/>
<path d="M8.9,21.6 H14.6" stroke="#555" stroke-width="0.5"/>
<path d="M15.4,19.6 L17.8,20.2" stroke="#444" stroke-width="0.55"/>
<circle cx="18.6" cy="16.1" r="1" fill="#00e000"/>
<circle cx="20.7" cy="16.2" r="0.4" fill="#e0c8d8"/>
<rect x="17.9" y="18.3" width="1.8" height="1" fill="#333"/>
<rect x="17.8" y="19.2" width="2.1" height="1.9" fill="#e8e400" stroke="#555" stroke-width="0.3"/>
<rect x="18.1" y="21.1" width="1.5" height="0.8" fill="#333"/>
<rect x="18.2" y="21.9" width="1.3" height="0.9" fill="#d8d400"/>
<rect x="8.9" y="27.1" width="13.8" height="1.2" fill="#5c5c5c"/>
<rect x="35.9" y="15.2" width="4.4" height="12.5" fill="#0c0c0c"/>
<rect x="35.9" y="20.6" width="4.4" height="7.1" fill="#333"/>
<rect x="36.7" y="16" width="2.1" height="1.1" fill="#00c400"/>
<rect x="34.8" y="22" width="1.2" height="4" fill="#666"/>
<path d="M36,22.5 h4 M36,24.5 h4 M36,26.5 h4" stroke="#111" stroke-width="0.5"/>
<g transform="translate(42.00 24.40) scale(1.000)"><ellipse cx="0" cy="0" rx="4.5" ry="2.9" fill="#3a3a20"/><rect x="-4.6" y="-0.7" width="9.2" height="1.4" fill="#c8c400"/><path d="M-3.00,-3.20 L-1.95,0 L-3.00,3.20 L-4.05,0 Z" fill="#f0ec10" stroke="#66641a" stroke-width="0.35"/><path d="M0.00,-3.60 L1.05,0 L0.00,3.60 L-1.05,0 Z" fill="#f0ec10" stroke="#66641a" stroke-width="0.35"/><path d="M3.00,-3.10 L4.05,0 L3.00,3.10 L1.95,0 Z" fill="#f0ec10" stroke="#66641a" stroke-width="0.35"/><path d="M-1.5,-0.9 v1.8 M1.5,-0.9 v1.8" stroke="#333" stroke-width="0.6"/><path d="M-4.4,-0.2 h8.8" stroke="#fbf870" stroke-width="0.5"/></g>
<defs><linearGradient id="sv" x1="0" y1="0" x2="0" y2="1"><stop offset="0" stop-color="#e8e8e8"/><stop offset="0.5" stop-color="#b8b8b8"/><stop offset="1" stop-color="#787878"/></linearGradient></defs>
<rect x="63.3" y="18.5" width="2.7" height="3.4" fill="#c8c8c8" stroke="#888" stroke-width="0.3"/>
<circle cx="64.6" cy="17.9" r="1.9" fill="#dcdcdc" stroke="#888" stroke-width="0.4"/>
<path d="M58.6,21.6 H70.4 L71.8,23.4 V27.2 Q71.8,27.7 71.2,27.7 H58 Q57.4,27.7 57.4,27.2 V23.4 Z" fill="url(#sv)" stroke="#555" stroke-width="0.4"/>
<path d="M58.6,24.6 H70.6" stroke="#eee" stroke-width="0.4"/>
<circle cx="67.7" cy="23.3" r="0.7" fill="#00d000"/>
<rect x="83.5" y="16.2" width="4.3" height="7.2" fill="#000"/>
<circle cx="89" cy="17.6" r="0.8" fill="#00e000"/>
<rect x="83.8" y="24.6" width="3.2" height="2" fill="#000"/>
<circle cx="85.3" cy="28" r="0.75" fill="#00e000"/>
<rect x="90.6" y="17" width="4.4" height="1.6" fill="#b4b4b4"/>
<rect x="90.6" y="21" width="4.4" height="1.8" fill="#606060"/>
<rect x="90.6" y="25.2" width="4.4" height="2.2" fill="#000"/>
<path d="M107.6,21.6 V16.5 H113.6" fill="none" stroke="#9ab4d8" stroke-width="0.7"/>
<circle cx="107.6" cy="21.7" r="0.6" fill="#2848b0"/><circle cx="113.7" cy="16.5" r="0.6" fill="#2848b0"/>
<path d="M114,18.7 L117,21.6 L114,24.3 L111.2,21.6 Z" fill="#48b448" stroke="#48b448" stroke-width="0.8" stroke-linejoin="round"/>
<circle cx="114.1" cy="21.5" r="1" fill="#c8ecc8"/>
<path d="M113.2,21.2 h1.8 M114.6,20.4 l0.8,0.8 l-0.8,0.8" stroke="#207020" stroke-width="0.4" fill="none"/>
<path d="M107.2,25.8 H117.6" stroke="#80d080" stroke-width="0.7"/>
<circle cx="107.4" cy="25.8" r="0.6" fill="#40a840"/><circle cx="117.5" cy="25.8" r="0.6" fill="#40a840"/>
<rect x="154.3" y="15" width="13.8" height="13.5" fill="#f40000"/>
<path d="M154.3,28.5 H168.1 V15" fill="none" stroke="#a80000" stroke-width="0.8"/>
<circle cx="161.2" cy="21.6" r="3.9" fill="none" stroke="#fff" stroke-width="1"/>
<rect x="160.7" y="19" width="1.1" height="5.2" fill="#fff"/>
<rect x="311" y="41.2" width="3.9" height="3.2" fill="#444"/>
<rect x="311.6" y="41.8" width="2.7" height="1.9" fill="#20a0a0"/>
<polygon points="308.6,46.5 313.8,46.5 315.4,44.4 310.6,44.4" fill="#a0a0a0" stroke="#555" stroke-width="0.3"/>
<path d="M314.6,45.6 H317.3" stroke="#666" stroke-width="0.5"/>
<circle cx="317.9" cy="41.8" r="0.85" fill="#90e090"/>
<circle cx="320.6" cy="41.8" r="0.95" fill="#f00000"/>
<rect x="317.3" y="43.9" width="2.5" height="2.9" rx="0.8" fill="#e8e400" stroke="#444" stroke-width="0.4"/>
<rect x="318.1" y="46.8" width="0.9" height="1.8" fill="#444"/>
<rect x="308.70" y="49.8" width="1.8" height="2.3" fill="#111"/>
<rect x="310.95" y="49.8" width="1.8" height="2.3" fill="#111"/>
<rect x="313.20" y="49.8" width="1.8" height="2.3" fill="#111"/>
<rect x="315.45" y="49.8" width="1.8" height="2.3" fill="#111"/>
<rect x="317.70" y="49.8" width="1.8" height="2.3" fill="#111"/>
<rect x="319.95" y="49.8" width="1.8" height="2.3" fill="#111"/>
<rect x="308" y="52.8" width="14.6" height="0.7" fill="#222"/>
<rect x="361" y="43.6" width="8.2" height="7.7" fill="#c0c0c0" stroke="#777" stroke-width="0.4"/>
<rect x="362.6" y="45.8" width="5" height="4.5" fill="#6070ff"/>
<path d="M362,44.6 H368.4" stroke="#334" stroke-width="0.8" stroke-dasharray="0.7 0.6"/>
<path d="M367.4,44 L370,41.9" stroke="#3070e0" stroke-width="0.9"/>
<rect x="407" y="40.4" width="4.6" height="12.5" fill="#0c0c0c"/>
<rect x="407" y="46.4" width="4.6" height="6.5" fill="#333"/>
<rect x="407.9" y="41.1" width="1.9" height="1.1" fill="#00b000"/>
<rect x="406" y="47.5" width="1.1" height="4" fill="#666"/>
<g transform="translate(413.20 49.90) scale(0.980)"><ellipse cx="0" cy="0" rx="4.5" ry="2.9" fill="#3a3a20"/><rect x="-4.6" y="-0.7" width="9.2" height="1.4" fill="#c8c400"/><path d="M-3.00,-3.20 L-1.95,0 L-3.00,3.20 L-4.05,0 Z" fill="#f0ec10" stroke="#66641a" stroke-width="0.35"/><path d="M0.00,-3.60 L1.05,0 L0.00,3.60 L-1.05,0 Z" fill="#f0ec10" stroke="#66641a" stroke-width="0.35"/><path d="M3.00,-3.10 L4.05,0 L3.00,3.10 L1.95,0 Z" fill="#f0ec10" stroke="#66641a" stroke-width="0.35"/><path d="M-1.5,-0.9 v1.8 M1.5,-0.9 v1.8" stroke="#333" stroke-width="0.6"/><path d="M-4.4,-0.2 h8.8" stroke="#fbf870" stroke-width="0.5"/></g>
<circle cx="452" cy="42" r="2.8" fill="#fff" stroke="#7890d0" stroke-width="0.9"/>
<rect x="451.5" y="41.5" width="1.1" height="2.4" fill="#1838d0"/><rect x="451.5" y="40" width="1.1" height="1" fill="#1838d0"/>
<polygon points="459.5,42.2 463.7,49.3 455.3,49.3" fill="#f6f200" stroke="#333" stroke-width="0.55" stroke-linejoin="round"/>
<rect x="459.05" y="44.3" width="0.9" height="2.7" fill="#222"/><rect x="459.05" y="47.5" width="0.9" height="0.9" fill="#222"/>
<circle cx="451.8" cy="50.6" r="3.2" fill="#e82020" stroke="#a00000" stroke-width="0.4"/>
<path d="M450.3,49.1 L453.3,52.1 M453.3,49.1 L450.3,52.1" stroke="#fff" stroke-width="0.95"/>
<g transform="translate(507.80 47.30) scale(0.875)"><circle r="8" fill="#121212"/><ellipse cx="-1.1" cy="0" rx="5.6" ry="6.4" fill="#fff"/><path d="M-4.6,1.6 C-5.2,-0.6 -4.2,-3 -2,-3.9 C0.4,-4.8 3.2,-4 3.9,-2.4 C4.4,-1.2 3.6,0 2.2,0.2 C1,0.4 0.4,-0.6 -0.8,-0.8 C-2,-1 -2.8,-0.2 -2.6,0.8 C-2.5,1.5 -1.8,2 -1.6,2.6 C-2.6,2.9 -4.2,2.8 -4.6,1.6 Z" fill="#121212"/><path d="M2.6,-4.8 C5,-3.4 5.6,0.6 4.4,3 C3.6,4.6 2,5.6 0.6,6 C2.4,6.6 5.4,5.6 6.6,3 C7.8,0 6.6,-3.8 4.4,-5.4 Z" fill="#121212"/><path d="M2.4,0.4 C3.6,1 3.8,2.6 3,3.8 C3.8,3.2 4.6,1.8 4.2,0.6 Z" fill="#121212"/><path d="M-7.3,4.6 L-5,3.4 L-2.9,4.4 L-2.7,7.2 L-4.8,8.3 L-7,7.2 Z" fill="#f4f4f4"/><path d="M-6.6,5.2 h0.9 M-4.6,4.8 h0.9 M-6.3,6.8 h0.9 M-4.4,6.8 h0.9 M-5.4,5.9 h0.8" stroke="#333" stroke-width="0.7"/></g>
<rect x="438.7" y="14.2" width="7.4" height="7.4" fill="#333" stroke="#111" stroke-width="0.3"/>
<rect x="440.0" y="14.7" width="4.8" height="3.3" fill="#eee"/>
<rect x="440.5" y="19.0" width="3.4" height="2.4" fill="#999"/>
<rect x="449.0" y="14.2" width="7.6" height="7.6" fill="#eee" stroke="#666" stroke-width="0.6"/>
<path d="M452.8,14.2 v7.6 M449.0,18.0 h7.6" stroke="#666" stroke-width="0.9"/>
<rect x="460.8" y="15.1" width="5.6" height="6" fill="#fff" stroke="#444" stroke-width="0.55"/>
<rect x="460.8" y="14.9" width="5.6" height="1" fill="#3060c0"/>
<rect x="473.7" y="16.2" width="4" height="5.5" fill="#888" stroke="#333" stroke-width="0.4"/>
<circle cx="472.3" cy="15.8" r="1.5" fill="#c8a040" stroke="#333" stroke-width="0.4"/>
<rect x="471.7" y="17.4" width="1.6" height="3.6" fill="#20b040"/>
<rect x="473.3" y="20.2" width="1.2" height="1.6" fill="#c020c0"/>
<circle cx="485.5" cy="18.0" r="3.4" fill="#d8d8d8" stroke="#555" stroke-width="0.7"/>
<circle cx="485.5" cy="18.0" r="1.5" fill="#aaa" stroke="#555" stroke-width="0.5"/>
<path d="M485.5,14.6 v6.8 M482.1,18.0 h6.8" stroke="#666" stroke-width="0.4"/>
<rect x="491.5" y="12.8" width="9.4" height="10" fill="#fafafa" stroke="#ddd" stroke-width="0.4"/>
<rect x="493.5" y="14.4" width="2.6" height="4.2" fill="#000"/>
<rect x="493.7" y="19.4" width="2" height="1.3" fill="#000"/>
<circle cx="494.7" cy="21.6" r="0.55" fill="#00d000"/>
<circle cx="496.9" cy="15.2" r="0.5" fill="#00d000"/>
<rect x="497.7" y="15.0" width="2.4" height="0.9" fill="#aaa"/><rect x="497.7" y="17.2" width="2.4" height="1" fill="#555"/><rect x="497.7" y="19.6" width="2.4" height="1.2" fill="#000"/>
<path d="M503.4,21.4 v-5 h2.6 l0.8,0.9 h3 v1.4" fill="#c8b020" stroke="#554400" stroke-width="0.4"/>
<polygon points="503.4,21.4 504.8,17.8 510.6,17.8 509.2,21.4" fill="#f0e040" stroke="#554400" stroke-width="0.4"/>
<path d="M507.0,15.4 q1.4,-1.6 2.6,0" fill="none" stroke="#223" stroke-width="0.5"/>
<path d="M438.7,27.4 h5.2 l2,1 v1 l-2,1 h-5.2z" fill="#999" stroke="#444" stroke-width="0.4"/>
<rect x="440.1" y="28.6" width="3" height="1" fill="#e44"/>
<path d="M449.4,28.6 h7 M451.2,28.6 v2.2 M454.4,28.6 v2.4 M453.0,28.6 v-2.2" stroke="#555" stroke-width="0.9" fill="none"/>
<rect x="452.0" y="25.4" width="2.2" height="1.6" fill="#777"/><rect x="450.2" y="30.4" width="2" height="1.6" fill="#777"/><rect x="453.4" y="30.6" width="2.2" height="1.6" fill="#666"/>
<path d="M464.0,31.8 v-5.6 M462.2,28.1 l1.8,-2 l1.8,2" stroke="#000" stroke-width="0.85" fill="none"/>
<path d="M474.3,26.0 v5.6 M472.5,29.7 l1.8,2 l1.8,-2" stroke="#000" stroke-width="0.85" fill="none"/>
<path d="M482.6,25.8 l5,6 M487.6,25.8 l-5,6" stroke="#e03030" stroke-width="1.1"/>
<rect x="484.1" y="29.4" width="2" height="2.2" fill="#5060c0"/>
<path d="M492.7,32.0 v-5.6 h2.6 l0.8,1 h4 v4.6z" fill="#f0e060" stroke="#776600" stroke-width="0.4"/>
<circle cx="505.6" cy="27.0" r="1.5" fill="#d8e8ff" stroke="#3070d0" stroke-width="0.8"/>
<path d="M506.6,28.1 l3.4,3.6" stroke="#2050b0" stroke-width="1.2"/>
<g transform="translate(528.30 25.80) scale(1.038)"><circle r="8" fill="#121212"/><ellipse cx="-1.1" cy="0" rx="5.6" ry="6.4" fill="#fff"/><path d="M-4.6,1.6 C-5.2,-0.6 -4.2,-3 -2,-3.9 C0.4,-4.8 3.2,-4 3.9,-2.4 C4.4,-1.2 3.6,0 2.2,0.2 C1,0.4 0.4,-0.6 -0.8,-0.8 C-2,-1 -2.8,-0.2 -2.6,0.8 C-2.5,1.5 -1.8,2 -1.6,2.6 C-2.6,2.9 -4.2,2.8 -4.6,1.6 Z" fill="#121212"/><path d="M2.6,-4.8 C5,-3.4 5.6,0.6 4.4,3 C3.6,4.6 2,5.6 0.6,6 C2.4,6.6 5.4,5.6 6.6,3 C7.8,0 6.6,-3.8 4.4,-5.4 Z" fill="#121212"/><path d="M2.4,0.4 C3.6,1 3.8,2.6 3,3.8 C3.8,3.2 4.6,1.8 4.2,0.6 Z" fill="#121212"/><path d="M-7.3,4.6 L-5,3.4 L-2.9,4.4 L-2.7,7.2 L-4.8,8.3 L-7,7.2 Z" fill="#f4f4f4"/><path d="M-6.6,5.2 h0.9 M-4.6,4.8 h0.9 M-6.3,6.8 h0.9 M-4.4,6.8 h0.9 M-5.4,5.9 h0.8" stroke="#333" stroke-width="0.7"/></g>
</g>
</svg>
<svg style="left:0;top:0;will-change:transform" width="600" height="412" viewBox="0 0 600 412" font-family="Liberation Sans, sans-serif" xml:space="preserve" text-rendering="geometricPrecision">
<text x="14.10" y="8.40" font-size="5.74" fill="#2a2a2a" stroke="#2a2a2a" stroke-width="0.10"  transform="rotate(0.035 14.10 8.40)">Tordivel Solar - Wafer Inspection Master - 1 - 013*  [admin]</text>
<text x="10.00" y="34.40" font-size="5.21" fill="#111" stroke="#111" stroke-width="0.10"  transform="rotate(0.035 10.00 34.40)">Start</text>
<text x="33.00" y="34.40" font-size="4.82" fill="#111" stroke="#111" stroke-width="0.10"  transform="rotate(0.035 33.00 34.40)">Logon</text>
<text x="58.60" y="34.40" font-size="4.83" fill="#111" stroke="#111" stroke-width="0.10"  transform="rotate(0.035 58.60 34.40)">Save</text>
<text x="77.60" y="34.40" font-size="4.92" fill="#111" stroke="#111" stroke-width="0.10"  transform="rotate(0.035 77.60 34.40)">Snapshot</text>
<text x="104.40" y="34.40" font-size="4.96" fill="#111" stroke="#111" stroke-width="0.10"  transform="rotate(0.035 104.40 34.40)">Inspect</text>
<text x="132.00" y="34.40" font-size="4.67" fill="#111" stroke="#111" stroke-width="0.10"  transform="rotate(0.035 132.00 34.40)">Help</text>
<text x="155.40" y="34.40" font-size="4.54" fill="#111" stroke="#111" stroke-width="0.10"  transform="rotate(0.035 155.40 34.40)">Close</text>
<text x="7.00" y="44.40" font-size="5.00" fill="#111" stroke="#111" stroke-width="0.10"  transform="rotate(0.035 7.00 44.40)">All</text>
<text x="27.40" y="46.00" font-size="4.89" fill="#111" stroke="#111" stroke-width="0.10"  transform="rotate(0.035 27.40 46.00)">Image</text>
<text x="144.00" y="57.70" font-size="5.88" fill="#fff" font-weight="bold"  transform="rotate(0.035 144.00 57.70)">Image</text>
<text x="7.00" y="274.40" font-size="5.20" fill="#111" stroke="#111" stroke-width="0.10"  transform="rotate(0.035 7.00 274.40)">461x459-24 bit</text>
<text x="49.00" y="274.40" font-size="5.41" fill="#111" stroke="#111" stroke-width="0.10"  transform="rotate(0.035 49.00 274.40)">wafer2_0.jpg</text>
<text x="13.79" y="289.30" font-size="4.90" fill="#222" stroke="#222" stroke-width="0.12"  transform="rotate(0.035 13.79 289.30)">Class A</text>
<text x="51.06" y="289.30" font-size="4.90" fill="#222" stroke="#222" stroke-width="0.12"  transform="rotate(0.035 51.06 289.30)">Class B</text>
<text x="85.47" y="289.30" font-size="4.90" fill="#222" stroke="#222" stroke-width="0.12"  transform="rotate(0.035 85.47 289.30)">Sawmarks</text>
<text x="129.67" y="289.30" font-size="4.90" fill="#222" stroke="#222" stroke-width="0.12"  transform="rotate(0.035 129.67 289.30)">TTV</text>
<text x="162.03" y="289.30" font-size="4.90" fill="#3c0000" stroke="#3c0000" stroke-width="0.12"  transform="rotate(0.035 162.03 289.30)">Chipping</text>
<text x="193.30" y="289.30" font-size="4.90" fill="#222" stroke="#222" stroke-width="0.12"  transform="rotate(0.035 193.30 289.30)">Contamination</text>
<text x="234.66" y="289.30" font-size="4.90" fill="#222" stroke="#222" stroke-width="0.12"  transform="rotate(0.035 234.66 289.30)">Microcrack</text>
<text x="273.69" y="289.30" font-size="4.90" fill="#222" stroke="#222" stroke-width="0.12"  transform="rotate(0.035 273.69 289.30)">Unknown</text>
<text x="129.30" y="307.70" font-size="11.48" fill="#fff" font-weight="bold"  transform="rotate(0.035 129.30 307.70)">Yield OK</text>
<text x="38.70" y="320.00" font-size="6.49" fill="#111" font-weight="bold"  transform="rotate(0.035 38.70 320.00)">Consequtive error 13 of 0</text>
<text x="169.00" y="320.00" font-size="6.95" fill="#111" font-weight="bold"  transform="rotate(0.035 169.00 320.00)">Yield &gt;= 70.00% Current Yield = 0 %</text>
<text x="100.00" y="389.00" font-size="9.49" fill="#000" font-weight="bold"  transform="rotate(0.035 100.00 389.00)">Max sawmark 40.00 um</text>
<text x="192.50" y="405.00" font-size="5.09" fill="#222" stroke="#222" stroke-width="0.10"  transform="rotate(0.035 192.50 405.00)">[Pixels] X:12 Y:5  RGB[122,122,122]  HSI[0,0,122]</text>
<text x="479.00" y="405.00" font-size="5.28" fill="#222" stroke="#222" stroke-width="0.10"  transform="rotate(0.035 479.00 405.00)">English (United States)</text>
<text x="541.50" y="405.00" font-size="5.27" fill="#222" stroke="#222" stroke-width="0.10"  transform="rotate(0.035 541.50 405.00)">4/25/2008 11:28:17</text>
<text x="325.60" y="49.80" font-size="5.10" fill="#111" stroke="#111" stroke-width="0.10"  transform="rotate(0.035 325.60 49.80)">Operation</text>
<text x="375.00" y="49.80" font-size="5.20" fill="#111" stroke="#111" stroke-width="0.10"  transform="rotate(0.035 375.00 49.80)">Settings</text>
<text x="421.00" y="49.80" font-size="4.89" fill="#111" stroke="#111" stroke-width="0.10"  transform="rotate(0.035 421.00 49.80)">Service</text>
<text x="466.00" y="49.80" font-size="4.91" fill="#111" stroke="#111" stroke-width="0.10"  transform="rotate(0.035 466.00 49.80)">System log</text>
<text x="518.00" y="49.80" font-size="5.28" fill="#111" stroke="#111" stroke-width="0.10"  transform="rotate(0.035 518.00 49.80)">About</text>
<text x="308.80" y="65.60" font-size="5.14" fill="#111" stroke="#111" stroke-width="0.10"  transform="rotate(0.035 308.80 65.60)">Pareto chart</text>
<text x="342.60" y="66.70" font-size="5.01" fill="#111" stroke="#111" stroke-width="0.10"  transform="rotate(0.035 342.60 66.70)">History</text>
<text x="364.00" y="66.70" font-size="4.99" fill="#111" stroke="#111" stroke-width="0.10"  transform="rotate(0.035 364.00 66.70)">Curves</text>
<text x="385.50" y="66.70" font-size="5.50" fill="#111" stroke="#111" stroke-width="0.10"  transform="rotate(0.035 385.50 66.70)">Statistics</text>
<text x="334.25" y="185.30" font-size="5.30" fill="#111" stroke="#111" stroke-width="0.10"  transform="rotate(0.035 334.25 185.30)">0</text>
<text x="331.31" y="178.23" font-size="5.30" fill="#111" stroke="#111" stroke-width="0.10"  transform="rotate(0.035 331.31 178.23)">10</text>
<text x="331.31" y="171.16" font-size="5.30" fill="#111" stroke="#111" stroke-width="0.10"  transform="rotate(0.035 331.31 171.16)">20</text>
<text x="331.31" y="164.09" font-size="5.30" fill="#111" stroke="#111" stroke-width="0.10"  transform="rotate(0.035 331.31 164.09)">30</text>
<text x="331.31" y="157.02" font-size="5.30" fill="#111" stroke="#111" stroke-width="0.10"  transform="rotate(0.035 331.31 157.02)">40</text>
<text x="331.31" y="149.95" font-size="5.30" fill="#111" stroke="#111" stroke-width="0.10"  transform="rotate(0.035 331.31 149.95)">50</text>
<text x="331.31" y="142.88" font-size="5.30" fill="#111" stroke="#111" stroke-width="0.10"  transform="rotate(0.035 331.31 142.88)">60</text>
<text x="331.31" y="135.81" font-size="5.30" fill="#111" stroke="#111" stroke-width="0.10"  transform="rotate(0.035 331.31 135.81)">70</text>
<text x="331.31" y="128.74" font-size="5.30" fill="#111" stroke="#111" stroke-width="0.10"  transform="rotate(0.035 331.31 128.74)">80</text>
<text x="331.31" y="121.67" font-size="5.30" fill="#111" stroke="#111" stroke-width="0.10"  transform="rotate(0.035 331.31 121.67)">90</text>
<text x="328.36" y="114.60" font-size="5.30" fill="#111" stroke="#111" stroke-width="0.10"  transform="rotate(0.035 328.36 114.60)">100</text>
<text transform="translate(324.3 147.8) rotate(-90)" text-anchor="middle" y="1.64" font-size="4.76" fill="#111" stroke="#111" stroke-width="0.12">SUM REJECT IN %</text>
<text x="349.35" y="192.00" font-size="4.75" fill="#111" stroke="#111" stroke-width="0.10"  transform="rotate(0.035 349.35 192.00)">Class A</text>
<text x="377.48" y="192.00" font-size="4.75" fill="#111" stroke="#111" stroke-width="0.10"  transform="rotate(0.035 377.48 192.00)">ClassB</text>
<text x="401.42" y="192.00" font-size="4.75" fill="#111" stroke="#111" stroke-width="0.10"  transform="rotate(0.035 401.42 192.00)">Sawmarks</text>
<text x="435.51" y="192.00" font-size="4.75" fill="#111" stroke="#111" stroke-width="0.10"  transform="rotate(0.035 435.51 192.00)">TTV</text>
<text x="458.43" y="192.00" font-size="4.75" fill="#111" stroke="#111" stroke-width="0.10"  transform="rotate(0.035 458.43 192.00)">Chipping</text>
<text x="511.72" y="192.00" font-size="4.75" fill="#111" stroke="#111" stroke-width="0.10"  transform="rotate(0.035 511.72 192.00)">Microcrack</text>
<text x="540.60" y="192.00" font-size="4.75" fill="#111" stroke="#111" stroke-width="0.10"  transform="rotate(0.035 540.60 192.00)">Unknown</text>
<text x="372.60" y="202.60" font-size="4.95" fill="#111" stroke="#111" stroke-width="0.10"  transform="rotate(0.035 372.60 202.60)">Class A</text>
<text x="405.04" y="202.60" font-size="4.95" fill="#111" stroke="#111" stroke-width="0.10"  transform="rotate(0.035 405.04 202.60)">38.57 %</text>
<text x="372.60" y="209.20" font-size="4.95" fill="#111" stroke="#111" stroke-width="0.10"  transform="rotate(0.035 372.60 209.20)">TTV</text>
<text x="414.67" y="209.20" font-size="4.95" fill="#111" stroke="#111" stroke-width="0.10"  transform="rotate(0.035 414.67 209.20)">0 %</text>
<text x="372.60" y="215.80" font-size="4.95" fill="#111" stroke="#111" stroke-width="0.10"  transform="rotate(0.035 372.60 215.80)">Microcrack</text>
<text x="414.67" y="215.80" font-size="4.95" fill="#111" stroke="#111" stroke-width="0.10"  transform="rotate(0.035 414.67 215.80)">0 %</text>
<text x="438.70" y="202.60" font-size="4.95" fill="#111" stroke="#111" stroke-width="0.10"  transform="rotate(0.035 438.70 202.60)">ClassB</text>
<text x="471.14" y="202.60" font-size="4.95" fill="#111" stroke="#111" stroke-width="0.10"  transform="rotate(0.035 471.14 202.60)">16.35 %</text>
<text x="438.70" y="209.20" font-size="4.95" fill="#111" stroke="#111" stroke-width="0.10"  transform="rotate(0.035 438.70 209.20)">Chipping</text>
<text x="480.77" y="209.20" font-size="4.95" fill="#111" stroke="#111" stroke-width="0.10"  transform="rotate(0.035 480.77 209.20)">0 %</text>
<text x="438.70" y="215.80" font-size="4.95" fill="#111" stroke="#111" stroke-width="0.10"  transform="rotate(0.035 438.70 215.80)">Unknown</text>
<text x="473.89" y="215.80" font-size="4.95" fill="#111" stroke="#111" stroke-width="0.10"  transform="rotate(0.035 473.89 215.80)">4.74 %</text>
<text x="504.80" y="202.60" font-size="4.95" fill="#111" stroke="#111" stroke-width="0.10"  transform="rotate(0.035 504.80 202.60)">Sawmarks</text>
<text x="537.24" y="202.60" font-size="4.95" fill="#111" stroke="#111" stroke-width="0.10"  transform="rotate(0.035 537.24 202.60)">40.34 %</text>
<text x="504.80" y="209.20" font-size="4.95" fill="#111" stroke="#111" stroke-width="0.10"  transform="rotate(0.035 504.80 209.20)">Contamination</text>
<text x="546.87" y="209.20" font-size="4.95" fill="#111" stroke="#111" stroke-width="0.10"  transform="rotate(0.035 546.87 209.20)">0 %</text>
<text x="530.43" y="238.00" font-size="4.80" fill="#002800" stroke="#002800" stroke-width="0.10"  transform="rotate(0.035 530.43 238.00)">ST</text>
<text x="486.23" y="250.80" font-size="4.80" fill="#111" stroke="#111" stroke-width="0.10"  transform="rotate(0.035 486.23 250.80)">Sawm</text>
<text x="491.57" y="273.40" font-size="4.80" fill="#111" stroke="#111" stroke-width="0.10"  transform="rotate(0.035 491.57 273.40)">0</text>
<text x="486.90" y="303.60" font-size="4.80" fill="#111" stroke="#111" stroke-width="0.10"  transform="rotate(0.035 486.90 303.60)">Class</text>
<text x="491.57" y="326.30" font-size="4.80" fill="#111" stroke="#111" stroke-width="0.10"  transform="rotate(0.035 491.57 326.30)">0</text>
<text x="504.77" y="250.80" font-size="4.80" fill="#111" stroke="#111" stroke-width="0.10"  transform="rotate(0.035 504.77 250.80)">TTV</text>
<text x="507.97" y="273.40" font-size="4.80" fill="#111" stroke="#111" stroke-width="0.10"  transform="rotate(0.035 507.97 273.40)">0</text>
<text x="503.30" y="303.60" font-size="4.80" fill="#111" stroke="#111" stroke-width="0.10"  transform="rotate(0.035 503.30 303.60)">Class</text>
<text x="507.97" y="326.30" font-size="4.80" fill="#111" stroke="#111" stroke-width="0.10"  transform="rotate(0.035 507.97 326.30)">0</text>
<text x="519.83" y="250.80" font-size="4.80" fill="#111" stroke="#111" stroke-width="0.10"  transform="rotate(0.035 519.83 250.80)">Micro</text>
<text x="524.37" y="273.40" font-size="4.80" fill="#111" stroke="#111" stroke-width="0.10"  transform="rotate(0.035 524.37 273.40)">0</text>
<text x="519.70" y="303.60" font-size="4.80" fill="#111" stroke="#111" stroke-width="0.10"  transform="rotate(0.035 519.70 303.60)">Class</text>
<text x="524.37" y="326.30" font-size="4.80" fill="#111" stroke="#111" stroke-width="0.10"  transform="rotate(0.035 524.37 326.30)">0</text>
<text x="535.70" y="250.80" font-size="4.80" fill="#111" stroke="#111" stroke-width="0.10"  transform="rotate(0.035 535.70 250.80)">Conta</text>
<text x="540.77" y="273.40" font-size="4.80" fill="#111" stroke="#111" stroke-width="0.10"  transform="rotate(0.035 540.77 273.40)">0</text>
<text x="536.10" y="303.60" font-size="4.80" fill="#111" stroke="#111" stroke-width="0.10"  transform="rotate(0.035 536.10 303.60)">Class</text>
<text x="540.77" y="326.30" font-size="4.80" fill="#111" stroke="#111" stroke-width="0.10"  transform="rotate(0.035 540.77 326.30)">0</text>
<text x="551.70" y="250.80" font-size="4.80" fill="#111" stroke="#111" stroke-width="0.10"  transform="rotate(0.035 551.70 250.80)">Chippi</text>
<text x="557.17" y="273.40" font-size="4.80" fill="#111" stroke="#111" stroke-width="0.10"  transform="rotate(0.035 557.17 273.40)">0</text>
<text x="552.50" y="303.60" font-size="4.80" fill="#111" stroke="#111" stroke-width="0.10"  transform="rotate(0.035 552.50 303.60)">Class</text>
<text x="557.17" y="326.30" font-size="4.80" fill="#111" stroke="#111" stroke-width="0.10"  transform="rotate(0.035 557.17 326.30)">0</text>
<text x="567.96" y="250.80" font-size="4.80" fill="#111" stroke="#111" stroke-width="0.10"  transform="rotate(0.035 567.96 250.80)">Unkno</text>
<text x="573.57" y="273.40" font-size="4.80" fill="#111" stroke="#111" stroke-width="0.10"  transform="rotate(0.035 573.57 273.40)">0</text>
<text x="568.90" y="303.60" font-size="4.80" fill="#111" stroke="#111" stroke-width="0.10"  transform="rotate(0.035 568.90 303.60)">Class</text>
<text x="573.57" y="326.30" font-size="4.80" fill="#111" stroke="#111" stroke-width="0.10"  transform="rotate(0.035 573.57 326.30)">0</text>
<text x="349.30" y="271.30" font-size="5.25" fill="#001800" stroke="#001800" stroke-width="0.10" clip-path="url(#stc0)" transform="rotate(0.035 349.30 271.30)">Topology</text>
<text x="373.69" y="271.30" font-size="5.20" fill="#001800" stroke="#001800" stroke-width="0.10" clip-path="url(#stc1)" transform="rotate(0.035 373.69 271.30)">WMT</text>
<text x="389.13" y="271.30" font-size="5.20" fill="#001800" stroke="#001800" stroke-width="0.10" clip-path="url(#stc2)" transform="rotate(0.035 389.13 271.30)">WML</text>
<text x="414.93" y="271.30" font-size="5.20" fill="#001800" stroke="#001800" stroke-width="0.10" clip-path="url(#stc3)" transform="rotate(0.035 414.93 271.30)">MCI</text>
<text x="446.89" y="271.30" font-size="5.20" fill="#001800" stroke="#001800" stroke-width="0.10" clip-path="url(#stc4)" transform="rotate(0.035 446.89 271.30)">Surface</text>
<text x="314.50" y="340.40" font-size="5.00" fill="#222" stroke="#222" stroke-width="0.05"  transform="rotate(0.035 314.50 340.40)">Wafer states</text>
<text x="317.33" y="348.60" font-size="5.10" fill="#002800" stroke="#002800" stroke-width="0.08"  transform="rotate(0.035 317.33 348.60)">Pass</text>
<text x="342.09" y="348.60" font-size="5.10" fill="#300" stroke="#300" stroke-width="0.08"  transform="rotate(0.035 342.09 348.60)">Fail</text>
<text x="314.36" y="357.80" font-size="5.10" fill="#223" stroke="#223" stroke-width="0.08"  transform="rotate(0.035 314.36 357.80)">Missing</text>
<text x="314.92" y="367.00" font-size="5.10" fill="#fff" stroke="#fff" stroke-width="0.08"  transform="rotate(0.035 314.92 367.00)">Broken</text>
<text x="343.24" y="355.30" font-size="5.10" fill="#fff" stroke="#fff" stroke-width="0.10" clip-path="url(#nwclip)" transform="rotate(0.035 343.24 355.30)">No</text>
<text x="339.79" y="361.10" font-size="5.10" fill="#fff" stroke="#fff" stroke-width="0.10" clip-path="url(#nwclip)" transform="rotate(0.035 339.79 361.10)">Wafer</text>
<text x="475.80" y="354.30" font-size="4.98" fill="#222" stroke="#222" stroke-width="0.05"  transform="rotate(0.035 475.80 354.30)">Messages</text>
<text x="131.3" y="28.7" font-size="19.6" font-weight="bold" fill="#5a5a5a" stroke="#5a5a5a" stroke-width="1.3" transform="translate(0.7 0.5)">?</text>
<text x="131.3" y="28.7" font-size="19.6" font-weight="bold" fill="#f6f200" stroke="#f6f200" stroke-width="0.8">?</text>
<text x="131.3" y="28.7" font-size="19.6" font-weight="bold" fill="none" stroke="#fffff0" stroke-width="0.5" stroke-dasharray="9 60" stroke-dashoffset="-3" transform="translate(-0.2 -0.3)">?</text>
<text x="539.2" y="27.2" font-size="10" font-weight="bold" fill="#1a1a1a" textLength="50" lengthAdjust="spacingAndGlyphs" transform="rotate(0.035 539 27)">SCORPION</text>
<text x="540.6" y="32" font-size="3.9" font-weight="bold" fill="#1a1a1a" textLength="49.2" lengthAdjust="spacing" transform="rotate(0.035 540 32)">VISION SOFTWARE.</text>
<text x="343.20" y="388.20" font-size="12.56" fill="#4a0000" stroke="#4a0000" stroke-width="0.25" transform="rotate(0.035 343.20 388.20)">Unplanned maintenance by technician</text>
</svg>
</body>
</html>
